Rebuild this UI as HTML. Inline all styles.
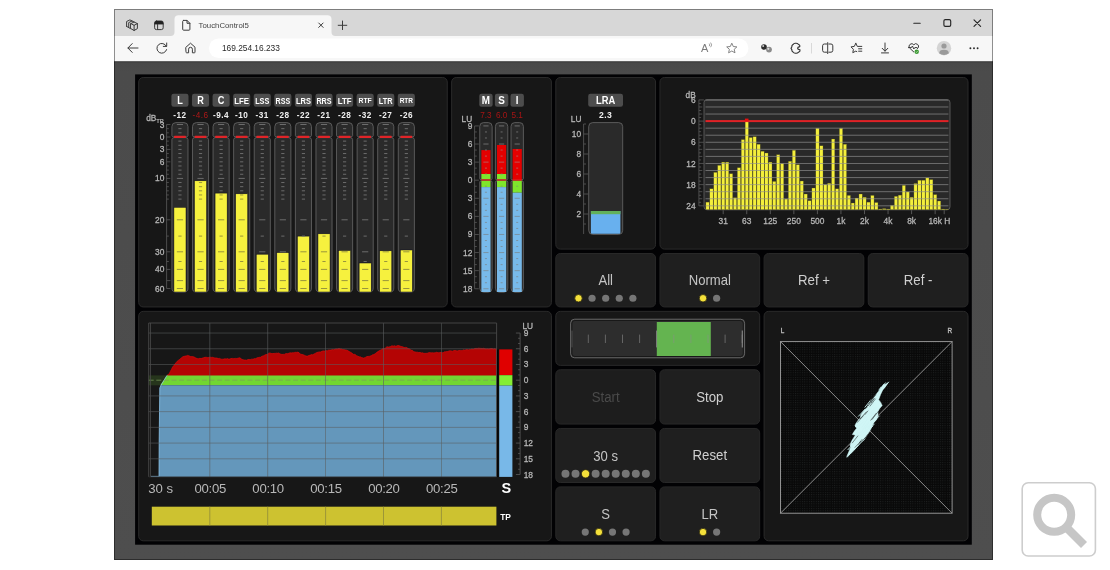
<!DOCTYPE html>
<html><head><meta charset="utf-8"><title>TouchControl5</title>
<style>
html,body{margin:0;padding:0;background:#fff;}
body{width:1110px;height:570px;overflow:hidden;font-family:"Liberation Sans",sans-serif;}
svg{display:block;will-change:transform;}
svg text{font-family:"Liberation Sans",sans-serif;}
</style></head><body>
<svg width="1110" height="570" viewBox="0 0 1110 570">
<defs>
<linearGradient id="gbg" x1="0" y1="0" x2="0" y2="1"><stop offset="0" stop-color="#383838"/><stop offset="0.004" stop-color="#494949"/><stop offset="0.02" stop-color="#4b4b4b"/><stop offset="1" stop-color="#4e4e4e"/></linearGradient>
<pattern id="dots" x="780.5" y="341.6" width="2.3" height="2.3" patternUnits="userSpaceOnUse"><rect width="2.3" height="2.3" fill="#090909"/><rect x="0.8" y="0.8" width="0.9" height="0.9" fill="#1f2222"/></pattern>
<clipPath id="specclip"><rect x="704" y="99.5" width="246" height="110.3" rx="3"/></clipPath>
</defs>
<rect x="0.00" y="0.00" width="1110.00" height="570.00" fill="#ffffff" />
<rect x="114.00" y="9.00" width="879.00" height="27.00" fill="#d7d7d7" />
<rect x="114.00" y="36.00" width="879.00" height="25.30" fill="#f7f7f7" />
<rect x="114.00" y="61.20" width="879.00" height="498.80" fill="url(#gbg)" />
<rect x="135.10" y="74.40" width="836.70" height="470.30" fill="#020204" />
<path d="M170.5 36 Q174.5 36 174.5 32 L174.5 19.3 Q174.5 15.3 178.5 15.3 L327.5 15.3 Q331.5 15.3 331.5 19.3 L331.5 32 Q331.5 36 335.5 36 Z" fill="#f7f7f7"/>
<rect x="208.90" y="38.40" width="539.50" height="19.60" fill="#ffffff" rx="9.8" />
<g fill="none" stroke="#3c3c3c" stroke-width="1" stroke-linecap="round" stroke-linejoin="round">
<path d="M130.8 23.6 l3.3 -1.6 l3.3 1.6 v5 l-3.3 1.9 l-3.3 -1.9 z M130.8 23.6 l3.3 1.7 l3.3 -1.7 M134.1 25.3 v5.2"/>
<path d="M128.7 27.6 v-5 l3.3 -1.6 l2.2 1 M128.7 27.6 l1.6 0.9 M126.6 26.4 v-4.9 l3.3 -1.6 l2.2 1 M126.6 26.4 l1.6 0.9"/>
<rect x="154.6" y="21" width="8.6" height="8.6" rx="1.8"/><path d="M154.6 24 h8.6 M157.6 24 v5.6"/>
</g>
<path d="M154.6 24 v-1.2 a1.8 1.8 0 0 1 1.8 -1.8 h5 a1.8 1.8 0 0 1 1.8 1.8 v1.2 z" fill="#222"/>
<g fill="none" stroke="#3c3c3c" stroke-width="1" stroke-linecap="round" stroke-linejoin="round">
<path d="M183.6 20.4 h3.4 l2.9 2.9 v6 a0.9 0.9 0 0 1 -0.9 0.9 h-5.4 a0.9 0.9 0 0 1 -0.9 -0.9 v-8 a0.9 0.9 0 0 1 0.9 -0.9 z M187 20.4 v2.9 h2.9"/>
<path d="M318.7 23 l4.4 4.4 M323.1 23 l-4.4 4.4"/>
<path d="M338.2 25.3 h8.6 M342.5 21 v8.6"/>
<path d="M128 48 h10 M132.2 43.6 l-4.3 4.4 l4.3 4.4"/>
<path d="M166.3 46.2 a4.9 4.9 0 1 0 0.3 3.4 M166.7 43 v3.4 h-3.4"/>
<path d="M186 47.2 l4.5 -4 l4.5 4 v5 a0.6 0.6 0 0 1 -0.6 0.6 h-2 v-3.6 a1.9 1.9 0 0 0 -3.8 0 v3.6 h-2 a0.6 0.6 0 0 1 -0.6 -0.6 z" stroke-width="1.0"/>
</g>
<text x="198.60" y="28.10" font-size="7.8" fill="#444" text-anchor="start" font-weight="normal" >TouchControl5</text>
<text x="221.90" y="51.00" font-size="8.35" fill="#2a2a2a" text-anchor="start" font-weight="normal" >169.254.16.233</text>
<g fill="none" stroke="#262626" stroke-width="1.15" stroke-linecap="round">
<path d="M913.8 23.2 h6.4"/>
<rect x="943.9" y="19.6" width="6.8" height="6.8" rx="1.4"/>
<path d="M974 19.8 l6.6 6.6 M980.6 19.8 l-6.6 6.6"/>
</g>
<text x="701.00" y="52.20" font-size="11" fill="#7a7a7a" text-anchor="start" font-weight="normal" >A</text>
<path d="M709.2 43.6 a2 2 0 0 1 0 2.6 M710.6 42.6 a3.4 3.4 0 0 1 0 4.6" fill="none" stroke="#777" stroke-width="0.7"/>
<path d="M731.8 43.2 l1.5 3.3 l3.6 0.4 l-2.7 2.4 l0.8 3.5 l-3.2 -1.8 l-3.2 1.8 l0.8 -3.5 l-2.7 -2.4 l3.6 -0.4 z" fill="none" stroke="#777" stroke-width="0.9" stroke-linejoin="round"/>
<circle cx="769" cy="49.6" r="2.9" fill="#8a8a8a"/><circle cx="768.3" cy="48.8" r="1.1" fill="#dcdcdc"/><circle cx="764" cy="47" r="2.8" fill="#2c2c2c"/><circle cx="763.2" cy="46.1" r="1.0" fill="#d0d0d0"/>
<path d="M798.8 44.6 Q797 43 795.6 43.3 Q794 43 793 44.6 Q791.6 45.4 791.8 47 L791 48.2 L791.8 49.6 Q791.6 51.2 793 52 Q794 53.4 795.6 53.2 Q797.2 53.6 798.6 52.2 Q800.4 51.4 800 49.8 Q797.6 49.4 797.6 48.2 Q797.6 47 799.8 46.6 Q800.2 45.4 798.8 44.6 Z" fill="none" stroke="#333" stroke-width="1.15" stroke-linejoin="round"/>
<line x1="811.50" y1="43.00" x2="811.50" y2="53.50" stroke="#d0d0d0" stroke-width="0.8" />
<g fill="none" stroke="#3a3a3a" stroke-width="1" stroke-linecap="round" stroke-linejoin="round">
<path d="M826.6 44 h-2.2 a1.8 1.8 0 0 0 -1.8 1.8 v4.6 a1.8 1.8 0 0 0 1.8 1.8 h2.2 M828.8 44 h2.2 a1.8 1.8 0 0 1 1.8 1.8 v4.6 a1.8 1.8 0 0 1 -1.8 1.8 h-2.2 M827.7 42.6 v11"/>
<path d="M855.8 43.3 l1.5 3.1 l1 0.1 M855.8 43.3 l-1.5 3.1 l-3.3 0.5 l2.4 2.4 l-0.6 3.4 l3 -1.6 l1 0.5 M858.6 46.4 h3.2 M858.6 48.8 h3.2 M858.6 51.2 h3.2"/>
<path d="M885 43 v8 M882.2 48.3 l2.8 2.9 l2.8 -2.9 M881.5 52.9 h7"/>
<path d="M913.8 52 l-4.2 -4 a2.5 2.5 0 0 1 4.2 -3.2 a2.5 2.5 0 0 1 4.2 3.2 l-0.6 0.6 M908.4 47.6 h3 l1 -1.6 l1.4 3 l1 -1.4 h2"/>
</g>
<circle cx="916.7" cy="51.7" r="2.2" fill="#3c9a34"/><path d="M915.7 51.8 l0.7 0.7 l1.3 -1.5" fill="none" stroke="#e8f4e0" stroke-width="0.6"/>
<circle cx="944" cy="48.2" r="7.2" fill="#d4d4d4"/><circle cx="944" cy="46" r="2.6" fill="#9a9a9a"/><path d="M939.2 53.2 a4.8 3.4 0 0 1 9.6 0 a7.2 7.2 0 0 1 -9.6 0 z" fill="#9a9a9a"/>
<circle cx="970.4" cy="48.3" r="0.95" fill="#2a2a2a"/><circle cx="974" cy="48.3" r="0.95" fill="#2a2a2a"/><circle cx="977.6" cy="48.3" r="0.95" fill="#2a2a2a"/>
<rect x="1022.20" y="482.80" width="73.20" height="73.20" fill="#ffffff" rx="6" stroke="#cdcdcd" stroke-width="1.6" />
<circle cx="1054.2" cy="514.8" r="17" fill="none" stroke="#c6c6c6" stroke-width="8"/>
<path d="M1066.5 527.5 L1084 545" stroke="#c6c6c6" stroke-width="8.5" fill="none"/>
<rect x="114.50" y="9.50" width="878.00" height="550.00" fill="none" stroke="#000000" stroke-width="1" opacity="0.42"/>
<rect x="138.70" y="77.50" width="308.55" height="229.45" fill="#171717" rx="4.5" stroke="#2a2a2a" stroke-width="1" />
<rect x="451.65" y="77.50" width="99.75" height="229.45" fill="#171717" rx="4.5" stroke="#2a2a2a" stroke-width="1" />
<rect x="555.80" y="77.50" width="99.75" height="171.60" fill="#171717" rx="4.5" stroke="#2a2a2a" stroke-width="1" />
<rect x="659.95" y="77.50" width="308.05" height="171.60" fill="#171717" rx="4.5" stroke="#2a2a2a" stroke-width="1" />
<rect x="138.70" y="311.35" width="412.70" height="229.45" fill="#171717" rx="4.5" stroke="#2a2a2a" stroke-width="1" />
<rect x="555.80" y="311.35" width="203.90" height="54.00" fill="#171717" rx="4.5" stroke="#2a2a2a" stroke-width="1" />
<rect x="764.10" y="311.35" width="203.90" height="229.45" fill="#171717" rx="4.5" stroke="#2a2a2a" stroke-width="1" />
<rect x="555.80" y="253.50" width="99.75" height="53.45" fill="#1f1f1f" rx="4.5" stroke="#282828" stroke-width="1" />
<text transform="translate(605.67 285.45) scale(0.95 1)" font-size="13.8" fill="#c4c4c4" text-anchor="middle" font-weight="normal" >All</text>
<circle cx="578.47" cy="298.25" r="3.75" fill="#f4e03a" stroke="#2a2610" stroke-width="0.8"/>
<circle cx="592.07" cy="298.25" r="3.6" fill="#767676"/>
<circle cx="605.67" cy="298.25" r="3.6" fill="#767676"/>
<circle cx="619.27" cy="298.25" r="3.6" fill="#767676"/>
<circle cx="632.87" cy="298.25" r="3.6" fill="#767676"/>
<rect x="659.95" y="253.50" width="99.75" height="53.45" fill="#1f1f1f" rx="4.5" stroke="#282828" stroke-width="1" />
<text transform="translate(709.83 285.45) scale(0.95 1)" font-size="13.8" fill="#c4c4c4" text-anchor="middle" font-weight="normal" >Normal</text>
<circle cx="703.03" cy="298.25" r="3.75" fill="#f4e03a" stroke="#2a2610" stroke-width="0.8"/>
<circle cx="716.63" cy="298.25" r="3.6" fill="#767676"/>
<rect x="764.10" y="253.50" width="99.75" height="53.45" fill="#1f1f1f" rx="4.5" stroke="#282828" stroke-width="1" />
<text transform="translate(813.98 285.23) scale(0.96 1)" font-size="13.8" fill="#d0d0d0" text-anchor="middle" font-weight="normal" >Ref +</text>
<rect x="868.25" y="253.50" width="99.75" height="53.45" fill="#1f1f1f" rx="4.5" stroke="#282828" stroke-width="1" />
<text transform="translate(918.12 285.23) scale(0.96 1)" font-size="13.8" fill="#d0d0d0" text-anchor="middle" font-weight="normal" >Ref -</text>
<rect x="555.80" y="369.75" width="99.75" height="54.30" fill="#1d1d1d" rx="4.5" stroke="#282828" stroke-width="1" />
<text transform="translate(605.67 401.90) scale(0.96 1)" font-size="13.8" fill="#4a4a4a" text-anchor="middle" font-weight="normal" >Start</text>
<rect x="659.95" y="369.75" width="99.75" height="54.30" fill="#1f1f1f" rx="4.5" stroke="#282828" stroke-width="1" />
<text transform="translate(709.83 401.90) scale(0.96 1)" font-size="13.8" fill="#d0d0d0" text-anchor="middle" font-weight="normal" >Stop</text>
<rect x="555.80" y="428.45" width="99.75" height="54.05" fill="#1f1f1f" rx="4.5" stroke="#282828" stroke-width="1" />
<text transform="translate(605.67 461.00) scale(0.95 1)" font-size="13.8" fill="#c4c4c4" text-anchor="middle" font-weight="normal" >30 s</text>
<circle cx="565.47" cy="473.80" r="4.0" fill="#767676"/>
<circle cx="575.52" cy="473.80" r="4.0" fill="#767676"/>
<circle cx="585.57" cy="473.80" r="4.15" fill="#f4e03a" stroke="#2a2610" stroke-width="0.8"/>
<circle cx="595.62" cy="473.80" r="4.0" fill="#767676"/>
<circle cx="605.67" cy="473.80" r="4.0" fill="#767676"/>
<circle cx="615.72" cy="473.80" r="4.0" fill="#767676"/>
<circle cx="625.77" cy="473.80" r="4.0" fill="#767676"/>
<circle cx="635.82" cy="473.80" r="4.0" fill="#767676"/>
<circle cx="645.87" cy="473.80" r="4.0" fill="#767676"/>
<rect x="659.95" y="428.45" width="99.75" height="54.05" fill="#1f1f1f" rx="4.5" stroke="#282828" stroke-width="1" />
<text transform="translate(709.83 460.48) scale(0.96 1)" font-size="13.8" fill="#d0d0d0" text-anchor="middle" font-weight="normal" >Reset</text>
<rect x="555.80" y="486.90" width="99.75" height="53.90" fill="#1f1f1f" rx="4.5" stroke="#282828" stroke-width="1" />
<text transform="translate(605.67 519.30) scale(0.95 1)" font-size="13.8" fill="#c4c4c4" text-anchor="middle" font-weight="normal" >S</text>
<circle cx="585.27" cy="532.10" r="3.6" fill="#767676"/>
<circle cx="598.88" cy="532.10" r="3.75" fill="#f4e03a" stroke="#2a2610" stroke-width="0.8"/>
<circle cx="612.48" cy="532.10" r="3.6" fill="#767676"/>
<circle cx="626.07" cy="532.10" r="3.6" fill="#767676"/>
<rect x="659.95" y="486.90" width="99.75" height="53.90" fill="#1f1f1f" rx="4.5" stroke="#282828" stroke-width="1" />
<text transform="translate(709.83 519.30) scale(0.95 1)" font-size="13.8" fill="#c4c4c4" text-anchor="middle" font-weight="normal" >LR</text>
<circle cx="703.03" cy="532.10" r="3.75" fill="#f4e03a" stroke="#2a2610" stroke-width="0.8"/>
<circle cx="716.63" cy="532.10" r="3.6" fill="#767676"/>
<rect x="171.40" y="93.70" width="17.10" height="13.10" fill="#4d4d4d" rx="2.2" />
<text transform="translate(179.95 104.00) scale(0.88 1)" font-size="10.4" fill="#ffffff" text-anchor="middle" font-weight="bold" >L</text>
<text x="179.95" y="118.20" font-size="8.2" fill="#f0f0f0" text-anchor="middle" font-weight="bold" letter-spacing="0.5">-12</text>
<path d="M171.90 135.6 V126.60 Q171.90 122.6 175.90 122.6 H184.00 Q188.00 122.6 188.00 126.6 V135.6 Q188.00 136.6 186.50 136.8 H173.40 Q171.90 136.6 171.90 135.6 Z" fill="#2a2a2a" stroke="#686868" stroke-width="0.8"/>
<path d="M171.90 139.6 Q171.90 138 173.90 137.6 H186.00 Q188.00 138 188.00 139.6 V288 Q188.00 292.2 184.00 292.2 H175.90 Q171.90 292.2 171.90 288 Z" fill="#2a2a2a" stroke="#686868" stroke-width="0.8"/>
<rect x="173.90" y="207.30" width="12.10" height="84.70" fill="#f6f13e" stroke="#0a0a20" stroke-width="0.5" />
<line x1="176.85" y1="124.50" x2="183.05" y2="124.50" stroke="#747474" stroke-width="0.9" />
<line x1="178.35" y1="128.67" x2="181.55" y2="128.67" stroke="#747474" stroke-width="0.9" />
<line x1="178.35" y1="132.83" x2="181.55" y2="132.83" stroke="#747474" stroke-width="0.9" />
<line x1="178.35" y1="141.14" x2="181.55" y2="141.14" stroke="#747474" stroke-width="0.9" />
<line x1="178.35" y1="145.28" x2="181.55" y2="145.28" stroke="#747474" stroke-width="0.9" />
<line x1="178.35" y1="149.42" x2="181.55" y2="149.42" stroke="#747474" stroke-width="0.9" />
<line x1="178.35" y1="153.56" x2="181.55" y2="153.56" stroke="#747474" stroke-width="0.9" />
<line x1="178.35" y1="157.70" x2="181.55" y2="157.70" stroke="#747474" stroke-width="0.9" />
<line x1="178.35" y1="161.84" x2="181.55" y2="161.84" stroke="#747474" stroke-width="0.9" />
<line x1="178.35" y1="165.98" x2="181.55" y2="165.98" stroke="#747474" stroke-width="0.9" />
<line x1="178.35" y1="170.12" x2="181.55" y2="170.12" stroke="#747474" stroke-width="0.9" />
<line x1="178.35" y1="174.26" x2="181.55" y2="174.26" stroke="#747474" stroke-width="0.9" />
<line x1="176.85" y1="178.40" x2="183.05" y2="178.40" stroke="#747474" stroke-width="0.9" />
<line x1="178.35" y1="182.54" x2="181.55" y2="182.54" stroke="#747474" stroke-width="0.9" />
<line x1="178.35" y1="186.68" x2="181.55" y2="186.68" stroke="#747474" stroke-width="0.9" />
<line x1="178.35" y1="190.82" x2="181.55" y2="190.82" stroke="#747474" stroke-width="0.9" />
<line x1="178.35" y1="194.96" x2="181.55" y2="194.96" stroke="#747474" stroke-width="0.9" />
<line x1="178.35" y1="199.10" x2="181.55" y2="199.10" stroke="#747474" stroke-width="0.9" />
<line x1="176.85" y1="219.80" x2="183.05" y2="219.80" stroke="#8f8b3c" stroke-width="0.9" />
<line x1="178.35" y1="236.10" x2="181.55" y2="236.10" stroke="#8f8b3c" stroke-width="0.9" />
<line x1="176.85" y1="251.80" x2="183.05" y2="251.80" stroke="#8f8b3c" stroke-width="0.9" />
<line x1="178.35" y1="261.50" x2="181.55" y2="261.50" stroke="#8f8b3c" stroke-width="0.9" />
<line x1="176.85" y1="269.40" x2="183.05" y2="269.40" stroke="#8f8b3c" stroke-width="0.9" />
<line x1="176.85" y1="280.60" x2="183.05" y2="280.60" stroke="#8f8b3c" stroke-width="0.9" />
<line x1="176.85" y1="288.50" x2="183.05" y2="288.50" stroke="#8f8b3c" stroke-width="0.9" />
<rect x="174.00" y="135.80" width="11.90" height="2.10" fill="#e02428" rx="0.6" />
<rect x="191.98" y="93.70" width="17.10" height="13.10" fill="#4d4d4d" rx="2.2" />
<text transform="translate(200.53 104.00) scale(0.88 1)" font-size="10.4" fill="#ffffff" text-anchor="middle" font-weight="bold" >R</text>
<text x="200.53" y="118.20" font-size="8.2" fill="#b01818" text-anchor="middle" font-weight="normal" letter-spacing="0.5">-4.6</text>
<path d="M192.48 135.6 V126.60 Q192.48 122.6 196.48 122.6 H204.58 Q208.58 122.6 208.58 126.6 V135.6 Q208.58 136.6 207.08 136.8 H193.98 Q192.48 136.6 192.48 135.6 Z" fill="#2a2a2a" stroke="#686868" stroke-width="0.8"/>
<path d="M192.48 139.6 Q192.48 138 194.48 137.6 H206.58 Q208.58 138 208.58 139.6 V288 Q208.58 292.2 204.58 292.2 H196.48 Q192.48 292.2 192.48 288 Z" fill="#2a2a2a" stroke="#686868" stroke-width="0.8"/>
<rect x="194.48" y="180.80" width="12.10" height="111.20" fill="#f6f13e" stroke="#0a0a20" stroke-width="0.5" />
<line x1="197.43" y1="124.50" x2="203.63" y2="124.50" stroke="#747474" stroke-width="0.9" />
<line x1="198.93" y1="128.67" x2="202.13" y2="128.67" stroke="#747474" stroke-width="0.9" />
<line x1="198.93" y1="132.83" x2="202.13" y2="132.83" stroke="#747474" stroke-width="0.9" />
<line x1="198.93" y1="141.14" x2="202.13" y2="141.14" stroke="#747474" stroke-width="0.9" />
<line x1="198.93" y1="145.28" x2="202.13" y2="145.28" stroke="#747474" stroke-width="0.9" />
<line x1="198.93" y1="149.42" x2="202.13" y2="149.42" stroke="#747474" stroke-width="0.9" />
<line x1="198.93" y1="153.56" x2="202.13" y2="153.56" stroke="#747474" stroke-width="0.9" />
<line x1="198.93" y1="157.70" x2="202.13" y2="157.70" stroke="#747474" stroke-width="0.9" />
<line x1="198.93" y1="161.84" x2="202.13" y2="161.84" stroke="#747474" stroke-width="0.9" />
<line x1="198.93" y1="165.98" x2="202.13" y2="165.98" stroke="#747474" stroke-width="0.9" />
<line x1="198.93" y1="170.12" x2="202.13" y2="170.12" stroke="#747474" stroke-width="0.9" />
<line x1="198.93" y1="174.26" x2="202.13" y2="174.26" stroke="#747474" stroke-width="0.9" />
<line x1="197.43" y1="178.40" x2="203.63" y2="178.40" stroke="#747474" stroke-width="0.9" />
<line x1="198.93" y1="182.54" x2="202.13" y2="182.54" stroke="#8f8b3c" stroke-width="0.9" />
<line x1="198.93" y1="186.68" x2="202.13" y2="186.68" stroke="#8f8b3c" stroke-width="0.9" />
<line x1="198.93" y1="190.82" x2="202.13" y2="190.82" stroke="#8f8b3c" stroke-width="0.9" />
<line x1="198.93" y1="194.96" x2="202.13" y2="194.96" stroke="#8f8b3c" stroke-width="0.9" />
<line x1="198.93" y1="199.10" x2="202.13" y2="199.10" stroke="#8f8b3c" stroke-width="0.9" />
<line x1="197.43" y1="219.80" x2="203.63" y2="219.80" stroke="#8f8b3c" stroke-width="0.9" />
<line x1="198.93" y1="236.10" x2="202.13" y2="236.10" stroke="#8f8b3c" stroke-width="0.9" />
<line x1="197.43" y1="251.80" x2="203.63" y2="251.80" stroke="#8f8b3c" stroke-width="0.9" />
<line x1="198.93" y1="261.50" x2="202.13" y2="261.50" stroke="#8f8b3c" stroke-width="0.9" />
<line x1="197.43" y1="269.40" x2="203.63" y2="269.40" stroke="#8f8b3c" stroke-width="0.9" />
<line x1="197.43" y1="280.60" x2="203.63" y2="280.60" stroke="#8f8b3c" stroke-width="0.9" />
<line x1="197.43" y1="288.50" x2="203.63" y2="288.50" stroke="#8f8b3c" stroke-width="0.9" />
<rect x="194.58" y="135.80" width="11.90" height="2.10" fill="#e02428" rx="0.6" />
<rect x="212.56" y="93.70" width="17.10" height="13.10" fill="#4d4d4d" rx="2.2" />
<text transform="translate(221.11 104.00) scale(0.88 1)" font-size="10.4" fill="#ffffff" text-anchor="middle" font-weight="bold" >C</text>
<text x="221.11" y="118.20" font-size="8.2" fill="#f0f0f0" text-anchor="middle" font-weight="bold" letter-spacing="0.5">-9.4</text>
<path d="M213.06 135.6 V126.60 Q213.06 122.6 217.06 122.6 H225.16 Q229.16 122.6 229.16 126.6 V135.6 Q229.16 136.6 227.66 136.8 H214.56 Q213.06 136.6 213.06 135.6 Z" fill="#2a2a2a" stroke="#686868" stroke-width="0.8"/>
<path d="M213.06 139.6 Q213.06 138 215.06 137.6 H227.16 Q229.16 138 229.16 139.6 V288 Q229.16 292.2 225.16 292.2 H217.06 Q213.06 292.2 213.06 288 Z" fill="#2a2a2a" stroke="#686868" stroke-width="0.8"/>
<rect x="215.06" y="193.10" width="12.10" height="98.90" fill="#f6f13e" stroke="#0a0a20" stroke-width="0.5" />
<line x1="218.01" y1="124.50" x2="224.21" y2="124.50" stroke="#747474" stroke-width="0.9" />
<line x1="219.51" y1="128.67" x2="222.71" y2="128.67" stroke="#747474" stroke-width="0.9" />
<line x1="219.51" y1="132.83" x2="222.71" y2="132.83" stroke="#747474" stroke-width="0.9" />
<line x1="219.51" y1="141.14" x2="222.71" y2="141.14" stroke="#747474" stroke-width="0.9" />
<line x1="219.51" y1="145.28" x2="222.71" y2="145.28" stroke="#747474" stroke-width="0.9" />
<line x1="219.51" y1="149.42" x2="222.71" y2="149.42" stroke="#747474" stroke-width="0.9" />
<line x1="219.51" y1="153.56" x2="222.71" y2="153.56" stroke="#747474" stroke-width="0.9" />
<line x1="219.51" y1="157.70" x2="222.71" y2="157.70" stroke="#747474" stroke-width="0.9" />
<line x1="219.51" y1="161.84" x2="222.71" y2="161.84" stroke="#747474" stroke-width="0.9" />
<line x1="219.51" y1="165.98" x2="222.71" y2="165.98" stroke="#747474" stroke-width="0.9" />
<line x1="219.51" y1="170.12" x2="222.71" y2="170.12" stroke="#747474" stroke-width="0.9" />
<line x1="219.51" y1="174.26" x2="222.71" y2="174.26" stroke="#747474" stroke-width="0.9" />
<line x1="218.01" y1="178.40" x2="224.21" y2="178.40" stroke="#747474" stroke-width="0.9" />
<line x1="219.51" y1="182.54" x2="222.71" y2="182.54" stroke="#747474" stroke-width="0.9" />
<line x1="219.51" y1="186.68" x2="222.71" y2="186.68" stroke="#747474" stroke-width="0.9" />
<line x1="219.51" y1="190.82" x2="222.71" y2="190.82" stroke="#747474" stroke-width="0.9" />
<line x1="219.51" y1="194.96" x2="222.71" y2="194.96" stroke="#8f8b3c" stroke-width="0.9" />
<line x1="219.51" y1="199.10" x2="222.71" y2="199.10" stroke="#8f8b3c" stroke-width="0.9" />
<line x1="218.01" y1="219.80" x2="224.21" y2="219.80" stroke="#8f8b3c" stroke-width="0.9" />
<line x1="219.51" y1="236.10" x2="222.71" y2="236.10" stroke="#8f8b3c" stroke-width="0.9" />
<line x1="218.01" y1="251.80" x2="224.21" y2="251.80" stroke="#8f8b3c" stroke-width="0.9" />
<line x1="219.51" y1="261.50" x2="222.71" y2="261.50" stroke="#8f8b3c" stroke-width="0.9" />
<line x1="218.01" y1="269.40" x2="224.21" y2="269.40" stroke="#8f8b3c" stroke-width="0.9" />
<line x1="218.01" y1="280.60" x2="224.21" y2="280.60" stroke="#8f8b3c" stroke-width="0.9" />
<line x1="218.01" y1="288.50" x2="224.21" y2="288.50" stroke="#8f8b3c" stroke-width="0.9" />
<rect x="215.16" y="135.80" width="11.90" height="2.10" fill="#e02428" rx="0.6" />
<rect x="233.14" y="93.70" width="17.10" height="13.10" fill="#4d4d4d" rx="2.2" />
<text transform="translate(241.69 104.40) scale(0.8 1)" font-size="9.8" fill="#ffffff" text-anchor="middle" font-weight="bold" >LFE</text>
<text x="241.69" y="118.20" font-size="8.2" fill="#f0f0f0" text-anchor="middle" font-weight="bold" letter-spacing="0.5">-10</text>
<path d="M233.64 135.6 V126.60 Q233.64 122.6 237.64 122.6 H245.74 Q249.74 122.6 249.74 126.6 V135.6 Q249.74 136.6 248.24 136.8 H235.14 Q233.64 136.6 233.64 135.6 Z" fill="#2a2a2a" stroke="#686868" stroke-width="0.8"/>
<path d="M233.64 139.6 Q233.64 138 235.64 137.6 H247.74 Q249.74 138 249.74 139.6 V288 Q249.74 292.2 245.74 292.2 H237.64 Q233.64 292.2 233.64 288 Z" fill="#2a2a2a" stroke="#686868" stroke-width="0.8"/>
<rect x="235.64" y="193.80" width="12.10" height="98.20" fill="#f6f13e" stroke="#0a0a20" stroke-width="0.5" />
<line x1="238.59" y1="124.50" x2="244.79" y2="124.50" stroke="#747474" stroke-width="0.9" />
<line x1="240.09" y1="128.67" x2="243.29" y2="128.67" stroke="#747474" stroke-width="0.9" />
<line x1="240.09" y1="132.83" x2="243.29" y2="132.83" stroke="#747474" stroke-width="0.9" />
<line x1="240.09" y1="141.14" x2="243.29" y2="141.14" stroke="#747474" stroke-width="0.9" />
<line x1="240.09" y1="145.28" x2="243.29" y2="145.28" stroke="#747474" stroke-width="0.9" />
<line x1="240.09" y1="149.42" x2="243.29" y2="149.42" stroke="#747474" stroke-width="0.9" />
<line x1="240.09" y1="153.56" x2="243.29" y2="153.56" stroke="#747474" stroke-width="0.9" />
<line x1="240.09" y1="157.70" x2="243.29" y2="157.70" stroke="#747474" stroke-width="0.9" />
<line x1="240.09" y1="161.84" x2="243.29" y2="161.84" stroke="#747474" stroke-width="0.9" />
<line x1="240.09" y1="165.98" x2="243.29" y2="165.98" stroke="#747474" stroke-width="0.9" />
<line x1="240.09" y1="170.12" x2="243.29" y2="170.12" stroke="#747474" stroke-width="0.9" />
<line x1="240.09" y1="174.26" x2="243.29" y2="174.26" stroke="#747474" stroke-width="0.9" />
<line x1="238.59" y1="178.40" x2="244.79" y2="178.40" stroke="#747474" stroke-width="0.9" />
<line x1="240.09" y1="182.54" x2="243.29" y2="182.54" stroke="#747474" stroke-width="0.9" />
<line x1="240.09" y1="186.68" x2="243.29" y2="186.68" stroke="#747474" stroke-width="0.9" />
<line x1="240.09" y1="190.82" x2="243.29" y2="190.82" stroke="#747474" stroke-width="0.9" />
<line x1="240.09" y1="194.96" x2="243.29" y2="194.96" stroke="#8f8b3c" stroke-width="0.9" />
<line x1="240.09" y1="199.10" x2="243.29" y2="199.10" stroke="#8f8b3c" stroke-width="0.9" />
<line x1="238.59" y1="219.80" x2="244.79" y2="219.80" stroke="#8f8b3c" stroke-width="0.9" />
<line x1="240.09" y1="236.10" x2="243.29" y2="236.10" stroke="#8f8b3c" stroke-width="0.9" />
<line x1="238.59" y1="251.80" x2="244.79" y2="251.80" stroke="#8f8b3c" stroke-width="0.9" />
<line x1="240.09" y1="261.50" x2="243.29" y2="261.50" stroke="#8f8b3c" stroke-width="0.9" />
<line x1="238.59" y1="269.40" x2="244.79" y2="269.40" stroke="#8f8b3c" stroke-width="0.9" />
<line x1="238.59" y1="280.60" x2="244.79" y2="280.60" stroke="#8f8b3c" stroke-width="0.9" />
<line x1="238.59" y1="288.50" x2="244.79" y2="288.50" stroke="#8f8b3c" stroke-width="0.9" />
<rect x="235.74" y="135.80" width="11.90" height="2.10" fill="#e02428" rx="0.6" />
<rect x="253.72" y="93.70" width="17.10" height="13.10" fill="#4d4d4d" rx="2.2" />
<text x="262.27" y="104.00" font-size="9.2" fill="#ffffff" text-anchor="middle" font-weight="bold" textLength="14.2" lengthAdjust="spacingAndGlyphs">LSS</text>
<text x="262.27" y="118.20" font-size="8.2" fill="#f0f0f0" text-anchor="middle" font-weight="bold" letter-spacing="0.5">-31</text>
<path d="M254.22 135.6 V126.60 Q254.22 122.6 258.22 122.6 H266.32 Q270.32 122.6 270.32 126.6 V135.6 Q270.32 136.6 268.82 136.8 H255.72 Q254.22 136.6 254.22 135.6 Z" fill="#2a2a2a" stroke="#686868" stroke-width="0.8"/>
<path d="M254.22 139.6 Q254.22 138 256.22 137.6 H268.32 Q270.32 138 270.32 139.6 V288 Q270.32 292.2 266.32 292.2 H258.22 Q254.22 292.2 254.22 288 Z" fill="#2a2a2a" stroke="#686868" stroke-width="0.8"/>
<rect x="256.22" y="254.20" width="12.10" height="37.80" fill="#f6f13e" stroke="#0a0a20" stroke-width="0.5" />
<line x1="259.17" y1="124.50" x2="265.37" y2="124.50" stroke="#747474" stroke-width="0.9" />
<line x1="260.67" y1="128.67" x2="263.87" y2="128.67" stroke="#747474" stroke-width="0.9" />
<line x1="260.67" y1="132.83" x2="263.87" y2="132.83" stroke="#747474" stroke-width="0.9" />
<line x1="260.67" y1="141.14" x2="263.87" y2="141.14" stroke="#747474" stroke-width="0.9" />
<line x1="260.67" y1="145.28" x2="263.87" y2="145.28" stroke="#747474" stroke-width="0.9" />
<line x1="260.67" y1="149.42" x2="263.87" y2="149.42" stroke="#747474" stroke-width="0.9" />
<line x1="260.67" y1="153.56" x2="263.87" y2="153.56" stroke="#747474" stroke-width="0.9" />
<line x1="260.67" y1="157.70" x2="263.87" y2="157.70" stroke="#747474" stroke-width="0.9" />
<line x1="260.67" y1="161.84" x2="263.87" y2="161.84" stroke="#747474" stroke-width="0.9" />
<line x1="260.67" y1="165.98" x2="263.87" y2="165.98" stroke="#747474" stroke-width="0.9" />
<line x1="260.67" y1="170.12" x2="263.87" y2="170.12" stroke="#747474" stroke-width="0.9" />
<line x1="260.67" y1="174.26" x2="263.87" y2="174.26" stroke="#747474" stroke-width="0.9" />
<line x1="259.17" y1="178.40" x2="265.37" y2="178.40" stroke="#747474" stroke-width="0.9" />
<line x1="260.67" y1="182.54" x2="263.87" y2="182.54" stroke="#747474" stroke-width="0.9" />
<line x1="260.67" y1="186.68" x2="263.87" y2="186.68" stroke="#747474" stroke-width="0.9" />
<line x1="260.67" y1="190.82" x2="263.87" y2="190.82" stroke="#747474" stroke-width="0.9" />
<line x1="260.67" y1="194.96" x2="263.87" y2="194.96" stroke="#747474" stroke-width="0.9" />
<line x1="260.67" y1="199.10" x2="263.87" y2="199.10" stroke="#747474" stroke-width="0.9" />
<line x1="259.17" y1="219.80" x2="265.37" y2="219.80" stroke="#747474" stroke-width="0.9" />
<line x1="260.67" y1="236.10" x2="263.87" y2="236.10" stroke="#747474" stroke-width="0.9" />
<line x1="259.17" y1="251.80" x2="265.37" y2="251.80" stroke="#747474" stroke-width="0.9" />
<line x1="260.67" y1="261.50" x2="263.87" y2="261.50" stroke="#8f8b3c" stroke-width="0.9" />
<line x1="259.17" y1="269.40" x2="265.37" y2="269.40" stroke="#8f8b3c" stroke-width="0.9" />
<line x1="259.17" y1="280.60" x2="265.37" y2="280.60" stroke="#8f8b3c" stroke-width="0.9" />
<line x1="259.17" y1="288.50" x2="265.37" y2="288.50" stroke="#8f8b3c" stroke-width="0.9" />
<rect x="256.32" y="135.80" width="11.90" height="2.10" fill="#e02428" rx="0.6" />
<rect x="274.30" y="93.70" width="17.10" height="13.10" fill="#4d4d4d" rx="2.2" />
<text x="282.85" y="104.00" font-size="9.2" fill="#ffffff" text-anchor="middle" font-weight="bold" textLength="14.6" lengthAdjust="spacingAndGlyphs">RSS</text>
<text x="282.85" y="118.20" font-size="8.2" fill="#f0f0f0" text-anchor="middle" font-weight="bold" letter-spacing="0.5">-28</text>
<path d="M274.80 135.6 V126.60 Q274.80 122.6 278.80 122.6 H286.90 Q290.90 122.6 290.90 126.6 V135.6 Q290.90 136.6 289.40 136.8 H276.30 Q274.80 136.6 274.80 135.6 Z" fill="#2a2a2a" stroke="#686868" stroke-width="0.8"/>
<path d="M274.80 139.6 Q274.80 138 276.80 137.6 H288.90 Q290.90 138 290.90 139.6 V288 Q290.90 292.2 286.90 292.2 H278.80 Q274.80 292.2 274.80 288 Z" fill="#2a2a2a" stroke="#686868" stroke-width="0.8"/>
<rect x="276.80" y="252.60" width="12.10" height="39.40" fill="#f6f13e" stroke="#0a0a20" stroke-width="0.5" />
<line x1="279.75" y1="124.50" x2="285.95" y2="124.50" stroke="#747474" stroke-width="0.9" />
<line x1="281.25" y1="128.67" x2="284.45" y2="128.67" stroke="#747474" stroke-width="0.9" />
<line x1="281.25" y1="132.83" x2="284.45" y2="132.83" stroke="#747474" stroke-width="0.9" />
<line x1="281.25" y1="141.14" x2="284.45" y2="141.14" stroke="#747474" stroke-width="0.9" />
<line x1="281.25" y1="145.28" x2="284.45" y2="145.28" stroke="#747474" stroke-width="0.9" />
<line x1="281.25" y1="149.42" x2="284.45" y2="149.42" stroke="#747474" stroke-width="0.9" />
<line x1="281.25" y1="153.56" x2="284.45" y2="153.56" stroke="#747474" stroke-width="0.9" />
<line x1="281.25" y1="157.70" x2="284.45" y2="157.70" stroke="#747474" stroke-width="0.9" />
<line x1="281.25" y1="161.84" x2="284.45" y2="161.84" stroke="#747474" stroke-width="0.9" />
<line x1="281.25" y1="165.98" x2="284.45" y2="165.98" stroke="#747474" stroke-width="0.9" />
<line x1="281.25" y1="170.12" x2="284.45" y2="170.12" stroke="#747474" stroke-width="0.9" />
<line x1="281.25" y1="174.26" x2="284.45" y2="174.26" stroke="#747474" stroke-width="0.9" />
<line x1="279.75" y1="178.40" x2="285.95" y2="178.40" stroke="#747474" stroke-width="0.9" />
<line x1="281.25" y1="182.54" x2="284.45" y2="182.54" stroke="#747474" stroke-width="0.9" />
<line x1="281.25" y1="186.68" x2="284.45" y2="186.68" stroke="#747474" stroke-width="0.9" />
<line x1="281.25" y1="190.82" x2="284.45" y2="190.82" stroke="#747474" stroke-width="0.9" />
<line x1="281.25" y1="194.96" x2="284.45" y2="194.96" stroke="#747474" stroke-width="0.9" />
<line x1="281.25" y1="199.10" x2="284.45" y2="199.10" stroke="#747474" stroke-width="0.9" />
<line x1="279.75" y1="219.80" x2="285.95" y2="219.80" stroke="#747474" stroke-width="0.9" />
<line x1="281.25" y1="236.10" x2="284.45" y2="236.10" stroke="#747474" stroke-width="0.9" />
<line x1="279.75" y1="251.80" x2="285.95" y2="251.80" stroke="#747474" stroke-width="0.9" />
<line x1="281.25" y1="261.50" x2="284.45" y2="261.50" stroke="#8f8b3c" stroke-width="0.9" />
<line x1="279.75" y1="269.40" x2="285.95" y2="269.40" stroke="#8f8b3c" stroke-width="0.9" />
<line x1="279.75" y1="280.60" x2="285.95" y2="280.60" stroke="#8f8b3c" stroke-width="0.9" />
<line x1="279.75" y1="288.50" x2="285.95" y2="288.50" stroke="#8f8b3c" stroke-width="0.9" />
<rect x="276.90" y="135.80" width="11.90" height="2.10" fill="#e02428" rx="0.6" />
<rect x="294.88" y="93.70" width="17.10" height="13.10" fill="#4d4d4d" rx="2.2" />
<text x="303.43" y="104.00" font-size="9.2" fill="#ffffff" text-anchor="middle" font-weight="bold" textLength="15.0" lengthAdjust="spacingAndGlyphs">LRS</text>
<text x="303.43" y="118.20" font-size="8.2" fill="#f0f0f0" text-anchor="middle" font-weight="bold" letter-spacing="0.5">-22</text>
<path d="M295.38 135.6 V126.60 Q295.38 122.6 299.38 122.6 H307.48 Q311.48 122.6 311.48 126.6 V135.6 Q311.48 136.6 309.98 136.8 H296.88 Q295.38 136.6 295.38 135.6 Z" fill="#2a2a2a" stroke="#686868" stroke-width="0.8"/>
<path d="M295.38 139.6 Q295.38 138 297.38 137.6 H309.48 Q311.48 138 311.48 139.6 V288 Q311.48 292.2 307.48 292.2 H299.38 Q295.38 292.2 295.38 288 Z" fill="#2a2a2a" stroke="#686868" stroke-width="0.8"/>
<rect x="297.38" y="236.10" width="12.10" height="55.90" fill="#f6f13e" stroke="#0a0a20" stroke-width="0.5" />
<line x1="300.33" y1="124.50" x2="306.53" y2="124.50" stroke="#747474" stroke-width="0.9" />
<line x1="301.83" y1="128.67" x2="305.03" y2="128.67" stroke="#747474" stroke-width="0.9" />
<line x1="301.83" y1="132.83" x2="305.03" y2="132.83" stroke="#747474" stroke-width="0.9" />
<line x1="301.83" y1="141.14" x2="305.03" y2="141.14" stroke="#747474" stroke-width="0.9" />
<line x1="301.83" y1="145.28" x2="305.03" y2="145.28" stroke="#747474" stroke-width="0.9" />
<line x1="301.83" y1="149.42" x2="305.03" y2="149.42" stroke="#747474" stroke-width="0.9" />
<line x1="301.83" y1="153.56" x2="305.03" y2="153.56" stroke="#747474" stroke-width="0.9" />
<line x1="301.83" y1="157.70" x2="305.03" y2="157.70" stroke="#747474" stroke-width="0.9" />
<line x1="301.83" y1="161.84" x2="305.03" y2="161.84" stroke="#747474" stroke-width="0.9" />
<line x1="301.83" y1="165.98" x2="305.03" y2="165.98" stroke="#747474" stroke-width="0.9" />
<line x1="301.83" y1="170.12" x2="305.03" y2="170.12" stroke="#747474" stroke-width="0.9" />
<line x1="301.83" y1="174.26" x2="305.03" y2="174.26" stroke="#747474" stroke-width="0.9" />
<line x1="300.33" y1="178.40" x2="306.53" y2="178.40" stroke="#747474" stroke-width="0.9" />
<line x1="301.83" y1="182.54" x2="305.03" y2="182.54" stroke="#747474" stroke-width="0.9" />
<line x1="301.83" y1="186.68" x2="305.03" y2="186.68" stroke="#747474" stroke-width="0.9" />
<line x1="301.83" y1="190.82" x2="305.03" y2="190.82" stroke="#747474" stroke-width="0.9" />
<line x1="301.83" y1="194.96" x2="305.03" y2="194.96" stroke="#747474" stroke-width="0.9" />
<line x1="301.83" y1="199.10" x2="305.03" y2="199.10" stroke="#747474" stroke-width="0.9" />
<line x1="300.33" y1="219.80" x2="306.53" y2="219.80" stroke="#747474" stroke-width="0.9" />
<line x1="301.83" y1="236.10" x2="305.03" y2="236.10" stroke="#747474" stroke-width="0.9" />
<line x1="300.33" y1="251.80" x2="306.53" y2="251.80" stroke="#8f8b3c" stroke-width="0.9" />
<line x1="301.83" y1="261.50" x2="305.03" y2="261.50" stroke="#8f8b3c" stroke-width="0.9" />
<line x1="300.33" y1="269.40" x2="306.53" y2="269.40" stroke="#8f8b3c" stroke-width="0.9" />
<line x1="300.33" y1="280.60" x2="306.53" y2="280.60" stroke="#8f8b3c" stroke-width="0.9" />
<line x1="300.33" y1="288.50" x2="306.53" y2="288.50" stroke="#8f8b3c" stroke-width="0.9" />
<rect x="297.48" y="135.80" width="11.90" height="2.10" fill="#e02428" rx="0.6" />
<rect x="315.46" y="93.70" width="17.10" height="13.10" fill="#4d4d4d" rx="2.2" />
<text x="324.01" y="104.00" font-size="9.2" fill="#ffffff" text-anchor="middle" font-weight="bold" textLength="15.2" lengthAdjust="spacingAndGlyphs">RRS</text>
<text x="324.01" y="118.20" font-size="8.2" fill="#f0f0f0" text-anchor="middle" font-weight="bold" letter-spacing="0.5">-21</text>
<path d="M315.96 135.6 V126.60 Q315.96 122.6 319.96 122.6 H328.06 Q332.06 122.6 332.06 126.6 V135.6 Q332.06 136.6 330.56 136.8 H317.46 Q315.96 136.6 315.96 135.6 Z" fill="#2a2a2a" stroke="#686868" stroke-width="0.8"/>
<path d="M315.96 139.6 Q315.96 138 317.96 137.6 H330.06 Q332.06 138 332.06 139.6 V288 Q332.06 292.2 328.06 292.2 H319.96 Q315.96 292.2 315.96 288 Z" fill="#2a2a2a" stroke="#686868" stroke-width="0.8"/>
<rect x="317.96" y="233.80" width="12.10" height="58.20" fill="#f6f13e" stroke="#0a0a20" stroke-width="0.5" />
<line x1="320.91" y1="124.50" x2="327.11" y2="124.50" stroke="#747474" stroke-width="0.9" />
<line x1="322.41" y1="128.67" x2="325.61" y2="128.67" stroke="#747474" stroke-width="0.9" />
<line x1="322.41" y1="132.83" x2="325.61" y2="132.83" stroke="#747474" stroke-width="0.9" />
<line x1="322.41" y1="141.14" x2="325.61" y2="141.14" stroke="#747474" stroke-width="0.9" />
<line x1="322.41" y1="145.28" x2="325.61" y2="145.28" stroke="#747474" stroke-width="0.9" />
<line x1="322.41" y1="149.42" x2="325.61" y2="149.42" stroke="#747474" stroke-width="0.9" />
<line x1="322.41" y1="153.56" x2="325.61" y2="153.56" stroke="#747474" stroke-width="0.9" />
<line x1="322.41" y1="157.70" x2="325.61" y2="157.70" stroke="#747474" stroke-width="0.9" />
<line x1="322.41" y1="161.84" x2="325.61" y2="161.84" stroke="#747474" stroke-width="0.9" />
<line x1="322.41" y1="165.98" x2="325.61" y2="165.98" stroke="#747474" stroke-width="0.9" />
<line x1="322.41" y1="170.12" x2="325.61" y2="170.12" stroke="#747474" stroke-width="0.9" />
<line x1="322.41" y1="174.26" x2="325.61" y2="174.26" stroke="#747474" stroke-width="0.9" />
<line x1="320.91" y1="178.40" x2="327.11" y2="178.40" stroke="#747474" stroke-width="0.9" />
<line x1="322.41" y1="182.54" x2="325.61" y2="182.54" stroke="#747474" stroke-width="0.9" />
<line x1="322.41" y1="186.68" x2="325.61" y2="186.68" stroke="#747474" stroke-width="0.9" />
<line x1="322.41" y1="190.82" x2="325.61" y2="190.82" stroke="#747474" stroke-width="0.9" />
<line x1="322.41" y1="194.96" x2="325.61" y2="194.96" stroke="#747474" stroke-width="0.9" />
<line x1="322.41" y1="199.10" x2="325.61" y2="199.10" stroke="#747474" stroke-width="0.9" />
<line x1="320.91" y1="219.80" x2="327.11" y2="219.80" stroke="#747474" stroke-width="0.9" />
<line x1="322.41" y1="236.10" x2="325.61" y2="236.10" stroke="#8f8b3c" stroke-width="0.9" />
<line x1="320.91" y1="251.80" x2="327.11" y2="251.80" stroke="#8f8b3c" stroke-width="0.9" />
<line x1="322.41" y1="261.50" x2="325.61" y2="261.50" stroke="#8f8b3c" stroke-width="0.9" />
<line x1="320.91" y1="269.40" x2="327.11" y2="269.40" stroke="#8f8b3c" stroke-width="0.9" />
<line x1="320.91" y1="280.60" x2="327.11" y2="280.60" stroke="#8f8b3c" stroke-width="0.9" />
<line x1="320.91" y1="288.50" x2="327.11" y2="288.50" stroke="#8f8b3c" stroke-width="0.9" />
<rect x="318.06" y="135.80" width="11.90" height="2.10" fill="#e02428" rx="0.6" />
<rect x="336.04" y="93.70" width="17.10" height="13.10" fill="#4d4d4d" rx="2.2" />
<text x="344.59" y="104.00" font-size="9.2" fill="#ffffff" text-anchor="middle" font-weight="bold" textLength="13.8" lengthAdjust="spacingAndGlyphs">LTF</text>
<text x="344.59" y="118.20" font-size="8.2" fill="#f0f0f0" text-anchor="middle" font-weight="bold" letter-spacing="0.5">-28</text>
<path d="M336.54 135.6 V126.60 Q336.54 122.6 340.54 122.6 H348.64 Q352.64 122.6 352.64 126.6 V135.6 Q352.64 136.6 351.14 136.8 H338.04 Q336.54 136.6 336.54 135.6 Z" fill="#2a2a2a" stroke="#686868" stroke-width="0.8"/>
<path d="M336.54 139.6 Q336.54 138 338.54 137.6 H350.64 Q352.64 138 352.64 139.6 V288 Q352.64 292.2 348.64 292.2 H340.54 Q336.54 292.2 336.54 288 Z" fill="#2a2a2a" stroke="#686868" stroke-width="0.8"/>
<rect x="338.54" y="250.50" width="12.10" height="41.50" fill="#f6f13e" stroke="#0a0a20" stroke-width="0.5" />
<line x1="341.49" y1="124.50" x2="347.69" y2="124.50" stroke="#747474" stroke-width="0.9" />
<line x1="342.99" y1="128.67" x2="346.19" y2="128.67" stroke="#747474" stroke-width="0.9" />
<line x1="342.99" y1="132.83" x2="346.19" y2="132.83" stroke="#747474" stroke-width="0.9" />
<line x1="342.99" y1="141.14" x2="346.19" y2="141.14" stroke="#747474" stroke-width="0.9" />
<line x1="342.99" y1="145.28" x2="346.19" y2="145.28" stroke="#747474" stroke-width="0.9" />
<line x1="342.99" y1="149.42" x2="346.19" y2="149.42" stroke="#747474" stroke-width="0.9" />
<line x1="342.99" y1="153.56" x2="346.19" y2="153.56" stroke="#747474" stroke-width="0.9" />
<line x1="342.99" y1="157.70" x2="346.19" y2="157.70" stroke="#747474" stroke-width="0.9" />
<line x1="342.99" y1="161.84" x2="346.19" y2="161.84" stroke="#747474" stroke-width="0.9" />
<line x1="342.99" y1="165.98" x2="346.19" y2="165.98" stroke="#747474" stroke-width="0.9" />
<line x1="342.99" y1="170.12" x2="346.19" y2="170.12" stroke="#747474" stroke-width="0.9" />
<line x1="342.99" y1="174.26" x2="346.19" y2="174.26" stroke="#747474" stroke-width="0.9" />
<line x1="341.49" y1="178.40" x2="347.69" y2="178.40" stroke="#747474" stroke-width="0.9" />
<line x1="342.99" y1="182.54" x2="346.19" y2="182.54" stroke="#747474" stroke-width="0.9" />
<line x1="342.99" y1="186.68" x2="346.19" y2="186.68" stroke="#747474" stroke-width="0.9" />
<line x1="342.99" y1="190.82" x2="346.19" y2="190.82" stroke="#747474" stroke-width="0.9" />
<line x1="342.99" y1="194.96" x2="346.19" y2="194.96" stroke="#747474" stroke-width="0.9" />
<line x1="342.99" y1="199.10" x2="346.19" y2="199.10" stroke="#747474" stroke-width="0.9" />
<line x1="341.49" y1="219.80" x2="347.69" y2="219.80" stroke="#747474" stroke-width="0.9" />
<line x1="342.99" y1="236.10" x2="346.19" y2="236.10" stroke="#747474" stroke-width="0.9" />
<line x1="341.49" y1="251.80" x2="347.69" y2="251.80" stroke="#8f8b3c" stroke-width="0.9" />
<line x1="342.99" y1="261.50" x2="346.19" y2="261.50" stroke="#8f8b3c" stroke-width="0.9" />
<line x1="341.49" y1="269.40" x2="347.69" y2="269.40" stroke="#8f8b3c" stroke-width="0.9" />
<line x1="341.49" y1="280.60" x2="347.69" y2="280.60" stroke="#8f8b3c" stroke-width="0.9" />
<line x1="341.49" y1="288.50" x2="347.69" y2="288.50" stroke="#8f8b3c" stroke-width="0.9" />
<rect x="338.64" y="135.80" width="11.90" height="2.10" fill="#e02428" rx="0.6" />
<rect x="356.62" y="93.70" width="17.10" height="13.10" fill="#4d4d4d" rx="2.2" />
<text x="365.17" y="103.20" font-size="7.8" fill="#ffffff" text-anchor="middle" font-weight="bold" textLength="13.2" lengthAdjust="spacingAndGlyphs">RTF</text>
<text x="365.17" y="118.20" font-size="8.2" fill="#f0f0f0" text-anchor="middle" font-weight="bold" letter-spacing="0.5">-32</text>
<path d="M357.12 135.6 V126.60 Q357.12 122.6 361.12 122.6 H369.22 Q373.22 122.6 373.22 126.6 V135.6 Q373.22 136.6 371.72 136.8 H358.62 Q357.12 136.6 357.12 135.6 Z" fill="#2a2a2a" stroke="#686868" stroke-width="0.8"/>
<path d="M357.12 139.6 Q357.12 138 359.12 137.6 H371.22 Q373.22 138 373.22 139.6 V288 Q373.22 292.2 369.22 292.2 H361.12 Q357.12 292.2 357.12 288 Z" fill="#2a2a2a" stroke="#686868" stroke-width="0.8"/>
<rect x="359.12" y="263.00" width="12.10" height="29.00" fill="#f6f13e" stroke="#0a0a20" stroke-width="0.5" />
<line x1="362.07" y1="124.50" x2="368.27" y2="124.50" stroke="#747474" stroke-width="0.9" />
<line x1="363.57" y1="128.67" x2="366.77" y2="128.67" stroke="#747474" stroke-width="0.9" />
<line x1="363.57" y1="132.83" x2="366.77" y2="132.83" stroke="#747474" stroke-width="0.9" />
<line x1="363.57" y1="141.14" x2="366.77" y2="141.14" stroke="#747474" stroke-width="0.9" />
<line x1="363.57" y1="145.28" x2="366.77" y2="145.28" stroke="#747474" stroke-width="0.9" />
<line x1="363.57" y1="149.42" x2="366.77" y2="149.42" stroke="#747474" stroke-width="0.9" />
<line x1="363.57" y1="153.56" x2="366.77" y2="153.56" stroke="#747474" stroke-width="0.9" />
<line x1="363.57" y1="157.70" x2="366.77" y2="157.70" stroke="#747474" stroke-width="0.9" />
<line x1="363.57" y1="161.84" x2="366.77" y2="161.84" stroke="#747474" stroke-width="0.9" />
<line x1="363.57" y1="165.98" x2="366.77" y2="165.98" stroke="#747474" stroke-width="0.9" />
<line x1="363.57" y1="170.12" x2="366.77" y2="170.12" stroke="#747474" stroke-width="0.9" />
<line x1="363.57" y1="174.26" x2="366.77" y2="174.26" stroke="#747474" stroke-width="0.9" />
<line x1="362.07" y1="178.40" x2="368.27" y2="178.40" stroke="#747474" stroke-width="0.9" />
<line x1="363.57" y1="182.54" x2="366.77" y2="182.54" stroke="#747474" stroke-width="0.9" />
<line x1="363.57" y1="186.68" x2="366.77" y2="186.68" stroke="#747474" stroke-width="0.9" />
<line x1="363.57" y1="190.82" x2="366.77" y2="190.82" stroke="#747474" stroke-width="0.9" />
<line x1="363.57" y1="194.96" x2="366.77" y2="194.96" stroke="#747474" stroke-width="0.9" />
<line x1="363.57" y1="199.10" x2="366.77" y2="199.10" stroke="#747474" stroke-width="0.9" />
<line x1="362.07" y1="219.80" x2="368.27" y2="219.80" stroke="#747474" stroke-width="0.9" />
<line x1="363.57" y1="236.10" x2="366.77" y2="236.10" stroke="#747474" stroke-width="0.9" />
<line x1="362.07" y1="251.80" x2="368.27" y2="251.80" stroke="#747474" stroke-width="0.9" />
<line x1="363.57" y1="261.50" x2="366.77" y2="261.50" stroke="#747474" stroke-width="0.9" />
<line x1="362.07" y1="269.40" x2="368.27" y2="269.40" stroke="#8f8b3c" stroke-width="0.9" />
<line x1="362.07" y1="280.60" x2="368.27" y2="280.60" stroke="#8f8b3c" stroke-width="0.9" />
<line x1="362.07" y1="288.50" x2="368.27" y2="288.50" stroke="#8f8b3c" stroke-width="0.9" />
<rect x="359.22" y="135.80" width="11.90" height="2.10" fill="#e02428" rx="0.6" />
<rect x="377.20" y="93.70" width="17.10" height="13.10" fill="#4d4d4d" rx="2.2" />
<text x="385.75" y="104.00" font-size="9.2" fill="#ffffff" text-anchor="middle" font-weight="bold" textLength="13.8" lengthAdjust="spacingAndGlyphs">LTR</text>
<text x="385.75" y="118.20" font-size="8.2" fill="#f0f0f0" text-anchor="middle" font-weight="bold" letter-spacing="0.5">-27</text>
<path d="M377.70 135.6 V126.60 Q377.70 122.6 381.70 122.6 H389.80 Q393.80 122.6 393.80 126.6 V135.6 Q393.80 136.6 392.30 136.8 H379.20 Q377.70 136.6 377.70 135.6 Z" fill="#2a2a2a" stroke="#686868" stroke-width="0.8"/>
<path d="M377.70 139.6 Q377.70 138 379.70 137.6 H391.80 Q393.80 138 393.80 139.6 V288 Q393.80 292.2 389.80 292.2 H381.70 Q377.70 292.2 377.70 288 Z" fill="#2a2a2a" stroke="#686868" stroke-width="0.8"/>
<rect x="379.70" y="250.80" width="12.10" height="41.20" fill="#f6f13e" stroke="#0a0a20" stroke-width="0.5" />
<line x1="382.65" y1="124.50" x2="388.85" y2="124.50" stroke="#747474" stroke-width="0.9" />
<line x1="384.15" y1="128.67" x2="387.35" y2="128.67" stroke="#747474" stroke-width="0.9" />
<line x1="384.15" y1="132.83" x2="387.35" y2="132.83" stroke="#747474" stroke-width="0.9" />
<line x1="384.15" y1="141.14" x2="387.35" y2="141.14" stroke="#747474" stroke-width="0.9" />
<line x1="384.15" y1="145.28" x2="387.35" y2="145.28" stroke="#747474" stroke-width="0.9" />
<line x1="384.15" y1="149.42" x2="387.35" y2="149.42" stroke="#747474" stroke-width="0.9" />
<line x1="384.15" y1="153.56" x2="387.35" y2="153.56" stroke="#747474" stroke-width="0.9" />
<line x1="384.15" y1="157.70" x2="387.35" y2="157.70" stroke="#747474" stroke-width="0.9" />
<line x1="384.15" y1="161.84" x2="387.35" y2="161.84" stroke="#747474" stroke-width="0.9" />
<line x1="384.15" y1="165.98" x2="387.35" y2="165.98" stroke="#747474" stroke-width="0.9" />
<line x1="384.15" y1="170.12" x2="387.35" y2="170.12" stroke="#747474" stroke-width="0.9" />
<line x1="384.15" y1="174.26" x2="387.35" y2="174.26" stroke="#747474" stroke-width="0.9" />
<line x1="382.65" y1="178.40" x2="388.85" y2="178.40" stroke="#747474" stroke-width="0.9" />
<line x1="384.15" y1="182.54" x2="387.35" y2="182.54" stroke="#747474" stroke-width="0.9" />
<line x1="384.15" y1="186.68" x2="387.35" y2="186.68" stroke="#747474" stroke-width="0.9" />
<line x1="384.15" y1="190.82" x2="387.35" y2="190.82" stroke="#747474" stroke-width="0.9" />
<line x1="384.15" y1="194.96" x2="387.35" y2="194.96" stroke="#747474" stroke-width="0.9" />
<line x1="384.15" y1="199.10" x2="387.35" y2="199.10" stroke="#747474" stroke-width="0.9" />
<line x1="382.65" y1="219.80" x2="388.85" y2="219.80" stroke="#747474" stroke-width="0.9" />
<line x1="384.15" y1="236.10" x2="387.35" y2="236.10" stroke="#747474" stroke-width="0.9" />
<line x1="382.65" y1="251.80" x2="388.85" y2="251.80" stroke="#8f8b3c" stroke-width="0.9" />
<line x1="384.15" y1="261.50" x2="387.35" y2="261.50" stroke="#8f8b3c" stroke-width="0.9" />
<line x1="382.65" y1="269.40" x2="388.85" y2="269.40" stroke="#8f8b3c" stroke-width="0.9" />
<line x1="382.65" y1="280.60" x2="388.85" y2="280.60" stroke="#8f8b3c" stroke-width="0.9" />
<line x1="382.65" y1="288.50" x2="388.85" y2="288.50" stroke="#8f8b3c" stroke-width="0.9" />
<rect x="379.80" y="135.80" width="11.90" height="2.10" fill="#e02428" rx="0.6" />
<rect x="397.78" y="93.70" width="17.10" height="13.10" fill="#4d4d4d" rx="2.2" />
<text x="406.33" y="103.20" font-size="7.8" fill="#ffffff" text-anchor="middle" font-weight="bold" textLength="13.4" lengthAdjust="spacingAndGlyphs">RTR</text>
<text x="406.33" y="118.20" font-size="8.2" fill="#f0f0f0" text-anchor="middle" font-weight="bold" letter-spacing="0.5">-26</text>
<path d="M398.28 135.6 V126.60 Q398.28 122.6 402.28 122.6 H410.38 Q414.38 122.6 414.38 126.6 V135.6 Q414.38 136.6 412.88 136.8 H399.78 Q398.28 136.6 398.28 135.6 Z" fill="#2a2a2a" stroke="#686868" stroke-width="0.8"/>
<path d="M398.28 139.6 Q398.28 138 400.28 137.6 H412.38 Q414.38 138 414.38 139.6 V288 Q414.38 292.2 410.38 292.2 H402.28 Q398.28 292.2 398.28 288 Z" fill="#2a2a2a" stroke="#686868" stroke-width="0.8"/>
<rect x="400.28" y="250.00" width="12.10" height="42.00" fill="#f6f13e" stroke="#0a0a20" stroke-width="0.5" />
<line x1="403.23" y1="124.50" x2="409.43" y2="124.50" stroke="#747474" stroke-width="0.9" />
<line x1="404.73" y1="128.67" x2="407.93" y2="128.67" stroke="#747474" stroke-width="0.9" />
<line x1="404.73" y1="132.83" x2="407.93" y2="132.83" stroke="#747474" stroke-width="0.9" />
<line x1="404.73" y1="141.14" x2="407.93" y2="141.14" stroke="#747474" stroke-width="0.9" />
<line x1="404.73" y1="145.28" x2="407.93" y2="145.28" stroke="#747474" stroke-width="0.9" />
<line x1="404.73" y1="149.42" x2="407.93" y2="149.42" stroke="#747474" stroke-width="0.9" />
<line x1="404.73" y1="153.56" x2="407.93" y2="153.56" stroke="#747474" stroke-width="0.9" />
<line x1="404.73" y1="157.70" x2="407.93" y2="157.70" stroke="#747474" stroke-width="0.9" />
<line x1="404.73" y1="161.84" x2="407.93" y2="161.84" stroke="#747474" stroke-width="0.9" />
<line x1="404.73" y1="165.98" x2="407.93" y2="165.98" stroke="#747474" stroke-width="0.9" />
<line x1="404.73" y1="170.12" x2="407.93" y2="170.12" stroke="#747474" stroke-width="0.9" />
<line x1="404.73" y1="174.26" x2="407.93" y2="174.26" stroke="#747474" stroke-width="0.9" />
<line x1="403.23" y1="178.40" x2="409.43" y2="178.40" stroke="#747474" stroke-width="0.9" />
<line x1="404.73" y1="182.54" x2="407.93" y2="182.54" stroke="#747474" stroke-width="0.9" />
<line x1="404.73" y1="186.68" x2="407.93" y2="186.68" stroke="#747474" stroke-width="0.9" />
<line x1="404.73" y1="190.82" x2="407.93" y2="190.82" stroke="#747474" stroke-width="0.9" />
<line x1="404.73" y1="194.96" x2="407.93" y2="194.96" stroke="#747474" stroke-width="0.9" />
<line x1="404.73" y1="199.10" x2="407.93" y2="199.10" stroke="#747474" stroke-width="0.9" />
<line x1="403.23" y1="219.80" x2="409.43" y2="219.80" stroke="#747474" stroke-width="0.9" />
<line x1="404.73" y1="236.10" x2="407.93" y2="236.10" stroke="#747474" stroke-width="0.9" />
<line x1="403.23" y1="251.80" x2="409.43" y2="251.80" stroke="#8f8b3c" stroke-width="0.9" />
<line x1="404.73" y1="261.50" x2="407.93" y2="261.50" stroke="#8f8b3c" stroke-width="0.9" />
<line x1="403.23" y1="269.40" x2="409.43" y2="269.40" stroke="#8f8b3c" stroke-width="0.9" />
<line x1="403.23" y1="280.60" x2="409.43" y2="280.60" stroke="#8f8b3c" stroke-width="0.9" />
<line x1="403.23" y1="288.50" x2="409.43" y2="288.50" stroke="#8f8b3c" stroke-width="0.9" />
<rect x="400.38" y="135.80" width="11.90" height="2.10" fill="#e02428" rx="0.6" />
<line x1="166.60" y1="124.50" x2="166.60" y2="288.50" stroke="#5a5a5a" stroke-width="0.8" />
<line x1="166.60" y1="124.50" x2="170.40" y2="124.50" stroke="#5a5a5a" stroke-width="0.8" />
<line x1="166.60" y1="128.67" x2="168.80" y2="128.67" stroke="#5a5a5a" stroke-width="0.8" />
<line x1="166.60" y1="132.83" x2="168.80" y2="132.83" stroke="#5a5a5a" stroke-width="0.8" />
<line x1="166.60" y1="141.14" x2="168.80" y2="141.14" stroke="#5a5a5a" stroke-width="0.8" />
<line x1="166.60" y1="145.28" x2="168.80" y2="145.28" stroke="#5a5a5a" stroke-width="0.8" />
<line x1="166.60" y1="149.42" x2="170.40" y2="149.42" stroke="#5a5a5a" stroke-width="0.8" />
<line x1="166.60" y1="153.56" x2="168.80" y2="153.56" stroke="#5a5a5a" stroke-width="0.8" />
<line x1="166.60" y1="157.70" x2="168.80" y2="157.70" stroke="#5a5a5a" stroke-width="0.8" />
<line x1="166.60" y1="161.84" x2="170.40" y2="161.84" stroke="#5a5a5a" stroke-width="0.8" />
<line x1="166.60" y1="165.98" x2="168.80" y2="165.98" stroke="#5a5a5a" stroke-width="0.8" />
<line x1="166.60" y1="170.12" x2="168.80" y2="170.12" stroke="#5a5a5a" stroke-width="0.8" />
<line x1="166.60" y1="174.26" x2="168.80" y2="174.26" stroke="#5a5a5a" stroke-width="0.8" />
<line x1="166.60" y1="178.40" x2="170.40" y2="178.40" stroke="#5a5a5a" stroke-width="0.8" />
<line x1="166.60" y1="182.54" x2="168.80" y2="182.54" stroke="#5a5a5a" stroke-width="0.8" />
<line x1="166.60" y1="186.68" x2="168.80" y2="186.68" stroke="#5a5a5a" stroke-width="0.8" />
<line x1="166.60" y1="190.82" x2="168.80" y2="190.82" stroke="#5a5a5a" stroke-width="0.8" />
<line x1="166.60" y1="194.96" x2="168.80" y2="194.96" stroke="#5a5a5a" stroke-width="0.8" />
<line x1="166.60" y1="199.10" x2="168.80" y2="199.10" stroke="#5a5a5a" stroke-width="0.8" />
<line x1="166.60" y1="219.80" x2="170.40" y2="219.80" stroke="#5a5a5a" stroke-width="0.8" />
<line x1="166.60" y1="236.10" x2="168.80" y2="236.10" stroke="#5a5a5a" stroke-width="0.8" />
<line x1="166.60" y1="251.80" x2="170.40" y2="251.80" stroke="#5a5a5a" stroke-width="0.8" />
<line x1="166.60" y1="261.50" x2="168.80" y2="261.50" stroke="#5a5a5a" stroke-width="0.8" />
<line x1="166.60" y1="269.40" x2="170.40" y2="269.40" stroke="#5a5a5a" stroke-width="0.8" />
<line x1="166.60" y1="280.60" x2="170.40" y2="280.60" stroke="#5a5a5a" stroke-width="0.8" />
<line x1="166.60" y1="288.50" x2="170.40" y2="288.50" stroke="#5a5a5a" stroke-width="0.8" />
<line x1="166.60" y1="137.00" x2="170.40" y2="137.00" stroke="#5a5a5a" stroke-width="0.8" />
<text x="164.40" y="127.50" font-size="8.4" fill="#b6b6b6" text-anchor="end" font-weight="normal" stroke="#b6b6b6" stroke-width="0.28" stroke-linejoin="round" >3</text>
<text x="164.40" y="140.00" font-size="8.4" fill="#b6b6b6" text-anchor="end" font-weight="normal" stroke="#b6b6b6" stroke-width="0.28" stroke-linejoin="round" >0</text>
<text x="164.40" y="152.42" font-size="8.4" fill="#b6b6b6" text-anchor="end" font-weight="normal" stroke="#b6b6b6" stroke-width="0.28" stroke-linejoin="round" >3</text>
<text x="164.40" y="164.84" font-size="8.4" fill="#b6b6b6" text-anchor="end" font-weight="normal" stroke="#b6b6b6" stroke-width="0.28" stroke-linejoin="round" >6</text>
<text x="164.40" y="181.40" font-size="8.4" fill="#b6b6b6" text-anchor="end" font-weight="normal" stroke="#b6b6b6" stroke-width="0.28" stroke-linejoin="round" >10</text>
<text x="164.40" y="222.80" font-size="8.4" fill="#b6b6b6" text-anchor="end" font-weight="normal" stroke="#b6b6b6" stroke-width="0.28" stroke-linejoin="round" >20</text>
<text x="164.40" y="254.80" font-size="8.4" fill="#b6b6b6" text-anchor="end" font-weight="normal" stroke="#b6b6b6" stroke-width="0.28" stroke-linejoin="round" >30</text>
<text x="164.40" y="272.40" font-size="8.4" fill="#b6b6b6" text-anchor="end" font-weight="normal" stroke="#b6b6b6" stroke-width="0.28" stroke-linejoin="round" >40</text>
<text x="164.40" y="291.50" font-size="8.4" fill="#b6b6b6" text-anchor="end" font-weight="normal" stroke="#b6b6b6" stroke-width="0.28" stroke-linejoin="round" >60</text>
<text x="146.20" y="120.80" font-size="8.3" fill="#b6b6b6" text-anchor="start" font-weight="normal" stroke="#b6b6b6" stroke-width="0.28" stroke-linejoin="round" >dB</text>
<text x="156.20" y="122.80" font-size="5.8" fill="#b6b6b6" text-anchor="start" font-weight="normal" stroke="#b6b6b6" stroke-width="0.2" stroke-linejoin="round" >TP</text>
<rect x="479.25" y="93.70" width="13.40" height="13.10" fill="#4d4d4d" rx="2.2" />
<text transform="translate(485.95 104.00) scale(0.95 1)" font-size="10.4" fill="#ffffff" text-anchor="middle" font-weight="bold" >M</text>
<text x="485.95" y="118.10" font-size="8.2" fill="#a81414" text-anchor="middle" font-weight="normal" >7.3</text>
<path d="M479.75 178.6 V126.4 Q479.75 122.6 483.55 122.6 H488.35 Q492.15 122.6 492.15 126.4 V178.6 Q492.15 179.8 490.65 179.8 H481.25 Q479.75 179.8 479.75 178.6 Z" fill="#2a2a2a" stroke="#686868" stroke-width="0.8"/>
<path d="M479.75 182.2 Q479.75 180.8 481.25 180.8 H490.65 Q492.15 180.8 492.15 182.2 V288.2 Q492.15 292.2 488.35 292.2 H483.55 Q479.75 292.2 479.75 288.2 Z" fill="#2a2a2a" stroke="#686868" stroke-width="0.8"/>
<rect x="481.35" y="150.10" width="9.20" height="23.90" fill="#e40000" />
<rect x="481.35" y="174.00" width="9.20" height="5.40" fill="#7fe62c" />
<rect x="481.35" y="179.30" width="9.20" height="1.40" fill="#e02020" />
<rect x="481.35" y="180.90" width="9.20" height="6.20" fill="#7fe62c" />
<rect x="481.35" y="187.10" width="9.20" height="104.90" fill="#78baea" />
<line x1="483.35" y1="125.93" x2="488.55" y2="125.93" stroke="#747474" stroke-width="0.9" />
<line x1="484.95" y1="131.96" x2="486.95" y2="131.96" stroke="#747474" stroke-width="0.9" />
<line x1="484.95" y1="137.99" x2="486.95" y2="137.99" stroke="#747474" stroke-width="0.9" />
<line x1="483.35" y1="144.02" x2="488.55" y2="144.02" stroke="#747474" stroke-width="0.9" />
<line x1="484.95" y1="150.05" x2="486.95" y2="150.05" stroke="#747474" stroke-width="0.9" />
<line x1="484.95" y1="156.08" x2="486.95" y2="156.08" stroke="#b86060" stroke-width="0.9" />
<line x1="483.35" y1="162.11" x2="488.55" y2="162.11" stroke="#b86060" stroke-width="0.9" />
<line x1="484.95" y1="168.14" x2="486.95" y2="168.14" stroke="#b86060" stroke-width="0.9" />
<line x1="484.95" y1="174.17" x2="486.95" y2="174.17" stroke="#7aa860" stroke-width="0.9" />
<line x1="484.95" y1="186.23" x2="486.95" y2="186.23" stroke="#7aa860" stroke-width="0.9" />
<line x1="484.95" y1="192.26" x2="486.95" y2="192.26" stroke="#7a8f9c" stroke-width="0.9" />
<line x1="483.35" y1="198.29" x2="488.55" y2="198.29" stroke="#7a8f9c" stroke-width="0.9" />
<line x1="484.95" y1="204.32" x2="486.95" y2="204.32" stroke="#7a8f9c" stroke-width="0.9" />
<line x1="484.95" y1="210.35" x2="486.95" y2="210.35" stroke="#7a8f9c" stroke-width="0.9" />
<line x1="483.35" y1="216.38" x2="488.55" y2="216.38" stroke="#7a8f9c" stroke-width="0.9" />
<line x1="484.95" y1="222.41" x2="486.95" y2="222.41" stroke="#7a8f9c" stroke-width="0.9" />
<line x1="484.95" y1="228.44" x2="486.95" y2="228.44" stroke="#7a8f9c" stroke-width="0.9" />
<line x1="483.35" y1="234.47" x2="488.55" y2="234.47" stroke="#7a8f9c" stroke-width="0.9" />
<line x1="484.95" y1="240.50" x2="486.95" y2="240.50" stroke="#7a8f9c" stroke-width="0.9" />
<line x1="484.95" y1="246.53" x2="486.95" y2="246.53" stroke="#7a8f9c" stroke-width="0.9" />
<line x1="483.35" y1="252.56" x2="488.55" y2="252.56" stroke="#7a8f9c" stroke-width="0.9" />
<line x1="484.95" y1="258.59" x2="486.95" y2="258.59" stroke="#7a8f9c" stroke-width="0.9" />
<line x1="484.95" y1="264.62" x2="486.95" y2="264.62" stroke="#7a8f9c" stroke-width="0.9" />
<line x1="483.35" y1="270.65" x2="488.55" y2="270.65" stroke="#7a8f9c" stroke-width="0.9" />
<line x1="484.95" y1="276.68" x2="486.95" y2="276.68" stroke="#7a8f9c" stroke-width="0.9" />
<line x1="484.95" y1="282.71" x2="486.95" y2="282.71" stroke="#7a8f9c" stroke-width="0.9" />
<line x1="483.35" y1="288.74" x2="488.55" y2="288.74" stroke="#7a8f9c" stroke-width="0.9" />
<rect x="494.90" y="93.70" width="13.40" height="13.10" fill="#4d4d4d" rx="2.2" />
<text transform="translate(501.60 104.00) scale(0.95 1)" font-size="10.4" fill="#ffffff" text-anchor="middle" font-weight="bold" >S</text>
<text x="501.60" y="118.10" font-size="8.2" fill="#a81414" text-anchor="middle" font-weight="normal" >6.0</text>
<path d="M495.40 178.6 V126.4 Q495.40 122.6 499.20 122.6 H504.00 Q507.80 122.6 507.80 126.4 V178.6 Q507.80 179.8 506.30 179.8 H496.90 Q495.40 179.8 495.40 178.6 Z" fill="#2a2a2a" stroke="#686868" stroke-width="0.8"/>
<path d="M495.40 182.2 Q495.40 180.8 496.90 180.8 H506.30 Q507.80 180.8 507.80 182.2 V288.2 Q507.80 292.2 504.00 292.2 H499.20 Q495.40 292.2 495.40 288.2 Z" fill="#2a2a2a" stroke="#686868" stroke-width="0.8"/>
<rect x="497.00" y="145.00" width="9.20" height="29.00" fill="#e40000" />
<rect x="497.00" y="174.00" width="9.20" height="5.40" fill="#7fe62c" />
<rect x="497.00" y="179.30" width="9.20" height="1.40" fill="#e02020" />
<rect x="497.00" y="180.90" width="9.20" height="6.20" fill="#7fe62c" />
<rect x="497.00" y="187.10" width="9.20" height="104.90" fill="#78baea" />
<line x1="499.00" y1="125.93" x2="504.20" y2="125.93" stroke="#747474" stroke-width="0.9" />
<line x1="500.60" y1="131.96" x2="502.60" y2="131.96" stroke="#747474" stroke-width="0.9" />
<line x1="500.60" y1="137.99" x2="502.60" y2="137.99" stroke="#747474" stroke-width="0.9" />
<line x1="499.00" y1="144.02" x2="504.20" y2="144.02" stroke="#747474" stroke-width="0.9" />
<line x1="500.60" y1="150.05" x2="502.60" y2="150.05" stroke="#b86060" stroke-width="0.9" />
<line x1="500.60" y1="156.08" x2="502.60" y2="156.08" stroke="#b86060" stroke-width="0.9" />
<line x1="499.00" y1="162.11" x2="504.20" y2="162.11" stroke="#b86060" stroke-width="0.9" />
<line x1="500.60" y1="168.14" x2="502.60" y2="168.14" stroke="#b86060" stroke-width="0.9" />
<line x1="500.60" y1="174.17" x2="502.60" y2="174.17" stroke="#7aa860" stroke-width="0.9" />
<line x1="500.60" y1="186.23" x2="502.60" y2="186.23" stroke="#7aa860" stroke-width="0.9" />
<line x1="500.60" y1="192.26" x2="502.60" y2="192.26" stroke="#7a8f9c" stroke-width="0.9" />
<line x1="499.00" y1="198.29" x2="504.20" y2="198.29" stroke="#7a8f9c" stroke-width="0.9" />
<line x1="500.60" y1="204.32" x2="502.60" y2="204.32" stroke="#7a8f9c" stroke-width="0.9" />
<line x1="500.60" y1="210.35" x2="502.60" y2="210.35" stroke="#7a8f9c" stroke-width="0.9" />
<line x1="499.00" y1="216.38" x2="504.20" y2="216.38" stroke="#7a8f9c" stroke-width="0.9" />
<line x1="500.60" y1="222.41" x2="502.60" y2="222.41" stroke="#7a8f9c" stroke-width="0.9" />
<line x1="500.60" y1="228.44" x2="502.60" y2="228.44" stroke="#7a8f9c" stroke-width="0.9" />
<line x1="499.00" y1="234.47" x2="504.20" y2="234.47" stroke="#7a8f9c" stroke-width="0.9" />
<line x1="500.60" y1="240.50" x2="502.60" y2="240.50" stroke="#7a8f9c" stroke-width="0.9" />
<line x1="500.60" y1="246.53" x2="502.60" y2="246.53" stroke="#7a8f9c" stroke-width="0.9" />
<line x1="499.00" y1="252.56" x2="504.20" y2="252.56" stroke="#7a8f9c" stroke-width="0.9" />
<line x1="500.60" y1="258.59" x2="502.60" y2="258.59" stroke="#7a8f9c" stroke-width="0.9" />
<line x1="500.60" y1="264.62" x2="502.60" y2="264.62" stroke="#7a8f9c" stroke-width="0.9" />
<line x1="499.00" y1="270.65" x2="504.20" y2="270.65" stroke="#7a8f9c" stroke-width="0.9" />
<line x1="500.60" y1="276.68" x2="502.60" y2="276.68" stroke="#7a8f9c" stroke-width="0.9" />
<line x1="500.60" y1="282.71" x2="502.60" y2="282.71" stroke="#7a8f9c" stroke-width="0.9" />
<line x1="499.00" y1="288.74" x2="504.20" y2="288.74" stroke="#7a8f9c" stroke-width="0.9" />
<rect x="510.50" y="93.70" width="13.40" height="13.10" fill="#4d4d4d" rx="2.2" />
<text transform="translate(517.20 104.00) scale(0.95 1)" font-size="10.4" fill="#ffffff" text-anchor="middle" font-weight="bold" >I</text>
<text x="517.20" y="118.10" font-size="8.2" fill="#a81414" text-anchor="middle" font-weight="normal" >5.1</text>
<path d="M511.00 178.6 V126.4 Q511.00 122.6 514.80 122.6 H519.60 Q523.40 122.6 523.40 126.4 V178.6 Q523.40 179.8 521.90 179.8 H512.50 Q511.00 179.8 511.00 178.6 Z" fill="#2a2a2a" stroke="#686868" stroke-width="0.8"/>
<path d="M511.00 182.2 Q511.00 180.8 512.50 180.8 H521.90 Q523.40 180.8 523.40 182.2 V288.2 Q523.40 292.2 519.60 292.2 H514.80 Q511.00 292.2 511.00 288.2 Z" fill="#2a2a2a" stroke="#686868" stroke-width="0.8"/>
<rect x="512.60" y="149.00" width="9.20" height="31.20" fill="#e40000" />
<rect x="512.60" y="179.30" width="9.20" height="1.40" fill="#e02020" />
<rect x="512.60" y="180.90" width="9.20" height="11.80" fill="#7fe62c" />
<rect x="512.60" y="192.70" width="9.20" height="99.30" fill="#78baea" />
<line x1="514.60" y1="125.93" x2="519.80" y2="125.93" stroke="#747474" stroke-width="0.9" />
<line x1="516.20" y1="131.96" x2="518.20" y2="131.96" stroke="#747474" stroke-width="0.9" />
<line x1="516.20" y1="137.99" x2="518.20" y2="137.99" stroke="#747474" stroke-width="0.9" />
<line x1="514.60" y1="144.02" x2="519.80" y2="144.02" stroke="#747474" stroke-width="0.9" />
<line x1="516.20" y1="150.05" x2="518.20" y2="150.05" stroke="#b86060" stroke-width="0.9" />
<line x1="516.20" y1="156.08" x2="518.20" y2="156.08" stroke="#b86060" stroke-width="0.9" />
<line x1="514.60" y1="162.11" x2="519.80" y2="162.11" stroke="#b86060" stroke-width="0.9" />
<line x1="516.20" y1="168.14" x2="518.20" y2="168.14" stroke="#b86060" stroke-width="0.9" />
<line x1="516.20" y1="174.17" x2="518.20" y2="174.17" stroke="#b86060" stroke-width="0.9" />
<line x1="516.20" y1="186.23" x2="518.20" y2="186.23" stroke="#7aa860" stroke-width="0.9" />
<line x1="516.20" y1="192.26" x2="518.20" y2="192.26" stroke="#7aa860" stroke-width="0.9" />
<line x1="514.60" y1="198.29" x2="519.80" y2="198.29" stroke="#7a8f9c" stroke-width="0.9" />
<line x1="516.20" y1="204.32" x2="518.20" y2="204.32" stroke="#7a8f9c" stroke-width="0.9" />
<line x1="516.20" y1="210.35" x2="518.20" y2="210.35" stroke="#7a8f9c" stroke-width="0.9" />
<line x1="514.60" y1="216.38" x2="519.80" y2="216.38" stroke="#7a8f9c" stroke-width="0.9" />
<line x1="516.20" y1="222.41" x2="518.20" y2="222.41" stroke="#7a8f9c" stroke-width="0.9" />
<line x1="516.20" y1="228.44" x2="518.20" y2="228.44" stroke="#7a8f9c" stroke-width="0.9" />
<line x1="514.60" y1="234.47" x2="519.80" y2="234.47" stroke="#7a8f9c" stroke-width="0.9" />
<line x1="516.20" y1="240.50" x2="518.20" y2="240.50" stroke="#7a8f9c" stroke-width="0.9" />
<line x1="516.20" y1="246.53" x2="518.20" y2="246.53" stroke="#7a8f9c" stroke-width="0.9" />
<line x1="514.60" y1="252.56" x2="519.80" y2="252.56" stroke="#7a8f9c" stroke-width="0.9" />
<line x1="516.20" y1="258.59" x2="518.20" y2="258.59" stroke="#7a8f9c" stroke-width="0.9" />
<line x1="516.20" y1="264.62" x2="518.20" y2="264.62" stroke="#7a8f9c" stroke-width="0.9" />
<line x1="514.60" y1="270.65" x2="519.80" y2="270.65" stroke="#7a8f9c" stroke-width="0.9" />
<line x1="516.20" y1="276.68" x2="518.20" y2="276.68" stroke="#7a8f9c" stroke-width="0.9" />
<line x1="516.20" y1="282.71" x2="518.20" y2="282.71" stroke="#7a8f9c" stroke-width="0.9" />
<line x1="514.60" y1="288.74" x2="519.80" y2="288.74" stroke="#7a8f9c" stroke-width="0.9" />
<line x1="474.60" y1="125.93" x2="474.60" y2="288.74" stroke="#5a5a5a" stroke-width="0.8" />
<line x1="474.60" y1="125.93" x2="478.80" y2="125.93" stroke="#5a5a5a" stroke-width="0.8" />
<line x1="474.60" y1="131.96" x2="476.80" y2="131.96" stroke="#5a5a5a" stroke-width="0.8" />
<line x1="474.60" y1="137.99" x2="476.80" y2="137.99" stroke="#5a5a5a" stroke-width="0.8" />
<line x1="474.60" y1="144.02" x2="478.80" y2="144.02" stroke="#5a5a5a" stroke-width="0.8" />
<line x1="474.60" y1="150.05" x2="476.80" y2="150.05" stroke="#5a5a5a" stroke-width="0.8" />
<line x1="474.60" y1="156.08" x2="476.80" y2="156.08" stroke="#5a5a5a" stroke-width="0.8" />
<line x1="474.60" y1="162.11" x2="478.80" y2="162.11" stroke="#5a5a5a" stroke-width="0.8" />
<line x1="474.60" y1="168.14" x2="476.80" y2="168.14" stroke="#5a5a5a" stroke-width="0.8" />
<line x1="474.60" y1="174.17" x2="476.80" y2="174.17" stroke="#5a5a5a" stroke-width="0.8" />
<line x1="474.60" y1="180.20" x2="478.80" y2="180.20" stroke="#5a5a5a" stroke-width="0.8" />
<line x1="474.60" y1="186.23" x2="476.80" y2="186.23" stroke="#5a5a5a" stroke-width="0.8" />
<line x1="474.60" y1="192.26" x2="476.80" y2="192.26" stroke="#5a5a5a" stroke-width="0.8" />
<line x1="474.60" y1="198.29" x2="478.80" y2="198.29" stroke="#5a5a5a" stroke-width="0.8" />
<line x1="474.60" y1="204.32" x2="476.80" y2="204.32" stroke="#5a5a5a" stroke-width="0.8" />
<line x1="474.60" y1="210.35" x2="476.80" y2="210.35" stroke="#5a5a5a" stroke-width="0.8" />
<line x1="474.60" y1="216.38" x2="478.80" y2="216.38" stroke="#5a5a5a" stroke-width="0.8" />
<line x1="474.60" y1="222.41" x2="476.80" y2="222.41" stroke="#5a5a5a" stroke-width="0.8" />
<line x1="474.60" y1="228.44" x2="476.80" y2="228.44" stroke="#5a5a5a" stroke-width="0.8" />
<line x1="474.60" y1="234.47" x2="478.80" y2="234.47" stroke="#5a5a5a" stroke-width="0.8" />
<line x1="474.60" y1="240.50" x2="476.80" y2="240.50" stroke="#5a5a5a" stroke-width="0.8" />
<line x1="474.60" y1="246.53" x2="476.80" y2="246.53" stroke="#5a5a5a" stroke-width="0.8" />
<line x1="474.60" y1="252.56" x2="478.80" y2="252.56" stroke="#5a5a5a" stroke-width="0.8" />
<line x1="474.60" y1="258.59" x2="476.80" y2="258.59" stroke="#5a5a5a" stroke-width="0.8" />
<line x1="474.60" y1="264.62" x2="476.80" y2="264.62" stroke="#5a5a5a" stroke-width="0.8" />
<line x1="474.60" y1="270.65" x2="478.80" y2="270.65" stroke="#5a5a5a" stroke-width="0.8" />
<line x1="474.60" y1="276.68" x2="476.80" y2="276.68" stroke="#5a5a5a" stroke-width="0.8" />
<line x1="474.60" y1="282.71" x2="476.80" y2="282.71" stroke="#5a5a5a" stroke-width="0.8" />
<line x1="474.60" y1="288.74" x2="478.80" y2="288.74" stroke="#5a5a5a" stroke-width="0.8" />
<text x="472.40" y="128.93" font-size="8.4" fill="#b6b6b6" text-anchor="end" font-weight="normal" stroke="#b6b6b6" stroke-width="0.28" stroke-linejoin="round" >9</text>
<text x="472.40" y="147.02" font-size="8.4" fill="#b6b6b6" text-anchor="end" font-weight="normal" stroke="#b6b6b6" stroke-width="0.28" stroke-linejoin="round" >6</text>
<text x="472.40" y="165.11" font-size="8.4" fill="#b6b6b6" text-anchor="end" font-weight="normal" stroke="#b6b6b6" stroke-width="0.28" stroke-linejoin="round" >3</text>
<text x="472.40" y="183.20" font-size="8.4" fill="#b6b6b6" text-anchor="end" font-weight="normal" stroke="#b6b6b6" stroke-width="0.28" stroke-linejoin="round" >0</text>
<text x="472.40" y="201.29" font-size="8.4" fill="#b6b6b6" text-anchor="end" font-weight="normal" stroke="#b6b6b6" stroke-width="0.28" stroke-linejoin="round" >3</text>
<text x="472.40" y="219.38" font-size="8.4" fill="#b6b6b6" text-anchor="end" font-weight="normal" stroke="#b6b6b6" stroke-width="0.28" stroke-linejoin="round" >6</text>
<text x="472.40" y="237.47" font-size="8.4" fill="#b6b6b6" text-anchor="end" font-weight="normal" stroke="#b6b6b6" stroke-width="0.28" stroke-linejoin="round" >9</text>
<text x="472.40" y="255.56" font-size="8.4" fill="#b6b6b6" text-anchor="end" font-weight="normal" stroke="#b6b6b6" stroke-width="0.28" stroke-linejoin="round" >12</text>
<text x="472.40" y="273.65" font-size="8.4" fill="#b6b6b6" text-anchor="end" font-weight="normal" stroke="#b6b6b6" stroke-width="0.28" stroke-linejoin="round" >15</text>
<text x="472.40" y="291.74" font-size="8.4" fill="#b6b6b6" text-anchor="end" font-weight="normal" stroke="#b6b6b6" stroke-width="0.28" stroke-linejoin="round" >18</text>
<text x="461.60" y="121.60" font-size="8.3" fill="#b6b6b6" text-anchor="start" font-weight="normal" stroke="#b6b6b6" stroke-width="0.28" stroke-linejoin="round" >LU</text>
<rect x="588.20" y="93.70" width="34.80" height="13.10" fill="#4d4d4d" rx="2.2" />
<text transform="translate(605.60 104.00) scale(0.9 1)" font-size="10.4" fill="#ffffff" text-anchor="middle" font-weight="bold" >LRA</text>
<text x="605.60" y="118.20" font-size="8.6" fill="#f0f0f0" text-anchor="middle" font-weight="bold" letter-spacing="0.4">2.3</text>
<rect x="588.70" y="122.60" width="34.00" height="111.80" fill="#2a2a2a" rx="4" stroke="#686868" stroke-width="0.8" />
<path d="M590.9 211 H620.4 V232.8 Q620.4 233.7 619.4 233.7 H591.9 Q590.9 233.7 590.9 232.8 Z" fill="#68b0ee"/>
<rect x="590.90" y="211.00" width="29.50" height="3.20" fill="#62b05a" />
<line x1="583.60" y1="124.00" x2="583.60" y2="234.00" stroke="#5a5a5a" stroke-width="0.8" />
<line x1="583.60" y1="224.00" x2="586.00" y2="224.00" stroke="#5a5a5a" stroke-width="0.8" />
<line x1="583.60" y1="214.00" x2="588.20" y2="214.00" stroke="#5a5a5a" stroke-width="0.8" />
<line x1="583.60" y1="204.00" x2="586.00" y2="204.00" stroke="#5a5a5a" stroke-width="0.8" />
<line x1="583.60" y1="194.00" x2="588.20" y2="194.00" stroke="#5a5a5a" stroke-width="0.8" />
<line x1="583.60" y1="184.00" x2="586.00" y2="184.00" stroke="#5a5a5a" stroke-width="0.8" />
<line x1="583.60" y1="174.00" x2="588.20" y2="174.00" stroke="#5a5a5a" stroke-width="0.8" />
<line x1="583.60" y1="164.00" x2="586.00" y2="164.00" stroke="#5a5a5a" stroke-width="0.8" />
<line x1="583.60" y1="154.00" x2="588.20" y2="154.00" stroke="#5a5a5a" stroke-width="0.8" />
<line x1="583.60" y1="144.00" x2="586.00" y2="144.00" stroke="#5a5a5a" stroke-width="0.8" />
<line x1="583.60" y1="134.00" x2="588.20" y2="134.00" stroke="#5a5a5a" stroke-width="0.8" />
<line x1="583.60" y1="124.00" x2="586.00" y2="124.00" stroke="#5a5a5a" stroke-width="0.8" />
<text x="581.20" y="217.00" font-size="8.4" fill="#b6b6b6" text-anchor="end" font-weight="normal" stroke="#b6b6b6" stroke-width="0.28" stroke-linejoin="round" >2</text>
<text x="581.20" y="197.00" font-size="8.4" fill="#b6b6b6" text-anchor="end" font-weight="normal" stroke="#b6b6b6" stroke-width="0.28" stroke-linejoin="round" >4</text>
<text x="581.20" y="177.00" font-size="8.4" fill="#b6b6b6" text-anchor="end" font-weight="normal" stroke="#b6b6b6" stroke-width="0.28" stroke-linejoin="round" >6</text>
<text x="581.20" y="157.00" font-size="8.4" fill="#b6b6b6" text-anchor="end" font-weight="normal" stroke="#b6b6b6" stroke-width="0.28" stroke-linejoin="round" >8</text>
<text x="581.20" y="137.00" font-size="8.4" fill="#b6b6b6" text-anchor="end" font-weight="normal" stroke="#b6b6b6" stroke-width="0.28" stroke-linejoin="round" >10</text>
<text x="570.80" y="121.60" font-size="8.3" fill="#b6b6b6" text-anchor="start" font-weight="normal" stroke="#b6b6b6" stroke-width="0.28" stroke-linejoin="round" >LU</text>
<rect x="704.00" y="99.50" width="246.00" height="110.30" fill="#292929" rx="3" stroke="#5e5e5e" stroke-width="0.9" />
<g clip-path="url(#specclip)">
<rect x="705.90" y="202.10" width="3.30" height="7.70" fill="#f4ef3c" stroke="#55521a" stroke-width="0.3" />
<rect x="709.82" y="188.80" width="3.30" height="21.00" fill="#f4ef3c" stroke="#55521a" stroke-width="0.3" />
<rect x="713.75" y="172.30" width="3.30" height="37.50" fill="#f4ef3c" stroke="#55521a" stroke-width="0.3" />
<rect x="717.67" y="165.30" width="3.30" height="44.50" fill="#f4ef3c" stroke="#55521a" stroke-width="0.3" />
<rect x="721.60" y="162.10" width="3.30" height="47.70" fill="#f4ef3c" stroke="#55521a" stroke-width="0.3" />
<rect x="725.52" y="162.10" width="3.30" height="47.70" fill="#f4ef3c" stroke="#55521a" stroke-width="0.3" />
<rect x="729.45" y="173.70" width="3.30" height="36.10" fill="#f4ef3c" stroke="#55521a" stroke-width="0.3" />
<rect x="733.38" y="197.70" width="3.30" height="12.10" fill="#f4ef3c" stroke="#55521a" stroke-width="0.3" />
<rect x="737.30" y="167.70" width="3.30" height="42.10" fill="#f4ef3c" stroke="#55521a" stroke-width="0.3" />
<rect x="741.23" y="139.60" width="3.30" height="70.20" fill="#f4ef3c" stroke="#55521a" stroke-width="0.3" />
<rect x="745.15" y="121.80" width="3.30" height="88.00" fill="#f4ef3c" stroke="#55521a" stroke-width="0.3" />
<rect x="749.07" y="137.50" width="3.30" height="72.30" fill="#f4ef3c" stroke="#55521a" stroke-width="0.3" />
<rect x="753.00" y="136.70" width="3.30" height="73.10" fill="#f4ef3c" stroke="#55521a" stroke-width="0.3" />
<rect x="756.92" y="144.20" width="3.30" height="65.60" fill="#f4ef3c" stroke="#55521a" stroke-width="0.3" />
<rect x="760.85" y="151.20" width="3.30" height="58.60" fill="#f4ef3c" stroke="#55521a" stroke-width="0.3" />
<rect x="764.77" y="153.00" width="3.30" height="56.80" fill="#f4ef3c" stroke="#55521a" stroke-width="0.3" />
<rect x="768.70" y="162.10" width="3.30" height="47.70" fill="#f4ef3c" stroke="#55521a" stroke-width="0.3" />
<rect x="772.62" y="181.40" width="3.30" height="28.40" fill="#f4ef3c" stroke="#55521a" stroke-width="0.3" />
<rect x="776.55" y="154.70" width="3.30" height="55.10" fill="#f4ef3c" stroke="#55521a" stroke-width="0.3" />
<rect x="780.48" y="163.50" width="3.30" height="46.30" fill="#f4ef3c" stroke="#55521a" stroke-width="0.3" />
<rect x="784.40" y="199.00" width="3.30" height="10.80" fill="#f4ef3c" stroke="#55521a" stroke-width="0.3" />
<rect x="788.32" y="161.20" width="3.30" height="48.60" fill="#f4ef3c" stroke="#55521a" stroke-width="0.3" />
<rect x="792.25" y="150.20" width="3.30" height="59.60" fill="#f4ef3c" stroke="#55521a" stroke-width="0.3" />
<rect x="796.17" y="164.70" width="3.30" height="45.10" fill="#f4ef3c" stroke="#55521a" stroke-width="0.3" />
<rect x="800.10" y="181.00" width="3.30" height="28.80" fill="#f4ef3c" stroke="#55521a" stroke-width="0.3" />
<rect x="804.02" y="194.00" width="3.30" height="15.80" fill="#f4ef3c" stroke="#55521a" stroke-width="0.3" />
<rect x="807.95" y="200.70" width="3.30" height="9.10" fill="#f4ef3c" stroke="#55521a" stroke-width="0.3" />
<rect x="811.88" y="188.00" width="3.30" height="21.80" fill="#f4ef3c" stroke="#55521a" stroke-width="0.3" />
<rect x="815.80" y="128.20" width="3.30" height="81.60" fill="#f4ef3c" stroke="#55521a" stroke-width="0.3" />
<rect x="819.72" y="145.80" width="3.30" height="64.00" fill="#f4ef3c" stroke="#55521a" stroke-width="0.3" />
<rect x="823.65" y="184.60" width="3.30" height="25.20" fill="#f4ef3c" stroke="#55521a" stroke-width="0.3" />
<rect x="827.57" y="183.20" width="3.30" height="26.60" fill="#f4ef3c" stroke="#55521a" stroke-width="0.3" />
<rect x="831.50" y="139.00" width="3.30" height="70.80" fill="#f4ef3c" stroke="#55521a" stroke-width="0.3" />
<rect x="835.42" y="188.80" width="3.30" height="21.00" fill="#f4ef3c" stroke="#55521a" stroke-width="0.3" />
<rect x="839.35" y="128.20" width="3.30" height="81.60" fill="#f4ef3c" stroke="#55521a" stroke-width="0.3" />
<rect x="843.27" y="144.20" width="3.30" height="65.60" fill="#f4ef3c" stroke="#55521a" stroke-width="0.3" />
<rect x="847.20" y="195.40" width="3.30" height="14.40" fill="#f4ef3c" stroke="#55521a" stroke-width="0.3" />
<rect x="851.12" y="203.00" width="3.30" height="6.80" fill="#f4ef3c" stroke="#55521a" stroke-width="0.3" />
<rect x="855.05" y="198.00" width="3.30" height="11.80" fill="#f4ef3c" stroke="#55521a" stroke-width="0.3" />
<rect x="858.97" y="194.00" width="3.30" height="15.80" fill="#f4ef3c" stroke="#55521a" stroke-width="0.3" />
<rect x="862.90" y="197.20" width="3.30" height="12.60" fill="#f4ef3c" stroke="#55521a" stroke-width="0.3" />
<rect x="866.82" y="202.10" width="3.30" height="7.70" fill="#f4ef3c" stroke="#55521a" stroke-width="0.3" />
<rect x="870.75" y="195.40" width="3.30" height="14.40" fill="#f4ef3c" stroke="#55521a" stroke-width="0.3" />
<rect x="874.67" y="202.50" width="3.30" height="7.30" fill="#f4ef3c" stroke="#55521a" stroke-width="0.3" />
<rect x="878.60" y="209.00" width="3.30" height="0.80" fill="#f4ef3c" stroke="#55521a" stroke-width="0.3" />
<rect x="882.52" y="208.60" width="3.30" height="1.20" fill="#f4ef3c" stroke="#55521a" stroke-width="0.3" />
<rect x="886.45" y="209.00" width="3.30" height="0.80" fill="#f4ef3c" stroke="#55521a" stroke-width="0.3" />
<rect x="890.38" y="205.30" width="3.30" height="4.50" fill="#f4ef3c" stroke="#55521a" stroke-width="0.3" />
<rect x="894.30" y="196.30" width="3.30" height="13.50" fill="#f4ef3c" stroke="#55521a" stroke-width="0.3" />
<rect x="898.22" y="195.10" width="3.30" height="14.70" fill="#f4ef3c" stroke="#55521a" stroke-width="0.3" />
<rect x="902.15" y="185.30" width="3.30" height="24.50" fill="#f4ef3c" stroke="#55521a" stroke-width="0.3" />
<rect x="906.07" y="191.90" width="3.30" height="17.90" fill="#f4ef3c" stroke="#55521a" stroke-width="0.3" />
<rect x="910.00" y="197.20" width="3.30" height="12.60" fill="#f4ef3c" stroke="#55521a" stroke-width="0.3" />
<rect x="913.92" y="183.50" width="3.30" height="26.30" fill="#f4ef3c" stroke="#55521a" stroke-width="0.3" />
<rect x="917.85" y="180.20" width="3.30" height="29.60" fill="#f4ef3c" stroke="#55521a" stroke-width="0.3" />
<rect x="921.77" y="180.20" width="3.30" height="29.60" fill="#f4ef3c" stroke="#55521a" stroke-width="0.3" />
<rect x="925.70" y="177.90" width="3.30" height="31.90" fill="#f4ef3c" stroke="#55521a" stroke-width="0.3" />
<rect x="929.62" y="179.60" width="3.30" height="30.20" fill="#f4ef3c" stroke="#55521a" stroke-width="0.3" />
<rect x="933.55" y="194.60" width="3.30" height="15.20" fill="#f4ef3c" stroke="#55521a" stroke-width="0.3" />
<rect x="937.47" y="201.00" width="3.30" height="8.80" fill="#f4ef3c" stroke="#55521a" stroke-width="0.3" />
<rect x="941.40" y="209.00" width="3.30" height="0.80" fill="#f4ef3c" stroke="#55521a" stroke-width="0.3" />
<rect x="945.32" y="209.20" width="3.30" height="0.60" fill="#f4ef3c" stroke="#55521a" stroke-width="0.3" />
</g>
<line x1="705.50" y1="106.98" x2="948.40" y2="106.98" stroke="#909090" stroke-width="0.9" opacity="0.75"/>
<line x1="705.50" y1="114.04" x2="948.40" y2="114.04" stroke="#909090" stroke-width="0.9" opacity="0.75"/>
<line x1="705.50" y1="128.16" x2="948.40" y2="128.16" stroke="#909090" stroke-width="0.9" opacity="0.75"/>
<line x1="705.50" y1="135.22" x2="948.40" y2="135.22" stroke="#909090" stroke-width="0.9" opacity="0.75"/>
<line x1="705.50" y1="142.28" x2="948.40" y2="142.28" stroke="#909090" stroke-width="0.9" opacity="0.75"/>
<line x1="705.50" y1="149.34" x2="948.40" y2="149.34" stroke="#909090" stroke-width="0.9" opacity="0.75"/>
<line x1="705.50" y1="156.40" x2="948.40" y2="156.40" stroke="#909090" stroke-width="0.9" opacity="0.75"/>
<line x1="705.50" y1="163.46" x2="948.40" y2="163.46" stroke="#909090" stroke-width="0.9" opacity="0.75"/>
<line x1="705.50" y1="170.52" x2="948.40" y2="170.52" stroke="#909090" stroke-width="0.9" opacity="0.75"/>
<line x1="705.50" y1="177.58" x2="948.40" y2="177.58" stroke="#909090" stroke-width="0.9" opacity="0.75"/>
<line x1="705.50" y1="184.64" x2="948.40" y2="184.64" stroke="#909090" stroke-width="0.9" opacity="0.75"/>
<line x1="705.50" y1="191.70" x2="948.40" y2="191.70" stroke="#909090" stroke-width="0.9" opacity="0.75"/>
<line x1="705.50" y1="198.76" x2="948.40" y2="198.76" stroke="#909090" stroke-width="0.9" opacity="0.75"/>
<line x1="705.50" y1="205.82" x2="948.40" y2="205.82" stroke="#909090" stroke-width="0.9" opacity="0.75"/>
<line x1="705.50" y1="100.20" x2="948.40" y2="100.20" stroke="#777" stroke-width="0.9" />
<rect x="705.50" y="120.10" width="243.00" height="2.00" fill="#e02226" />
<rect x="744.90" y="118.60" width="3.60" height="2.60" fill="#e81010" />
<line x1="698.90" y1="99.80" x2="698.90" y2="205.90" stroke="#5a5a5a" stroke-width="0.8" />
<line x1="698.90" y1="99.92" x2="703.90" y2="99.92" stroke="#5a5a5a" stroke-width="0.8" />
<line x1="698.90" y1="103.45" x2="701.10" y2="103.45" stroke="#5a5a5a" stroke-width="0.8" />
<line x1="698.90" y1="106.98" x2="702.30" y2="106.98" stroke="#5a5a5a" stroke-width="0.8" />
<line x1="698.90" y1="110.51" x2="701.10" y2="110.51" stroke="#5a5a5a" stroke-width="0.8" />
<line x1="698.90" y1="114.04" x2="702.30" y2="114.04" stroke="#5a5a5a" stroke-width="0.8" />
<line x1="698.90" y1="117.57" x2="701.10" y2="117.57" stroke="#5a5a5a" stroke-width="0.8" />
<line x1="698.90" y1="121.10" x2="703.90" y2="121.10" stroke="#5a5a5a" stroke-width="0.8" />
<line x1="698.90" y1="124.63" x2="701.10" y2="124.63" stroke="#5a5a5a" stroke-width="0.8" />
<line x1="698.90" y1="128.16" x2="702.30" y2="128.16" stroke="#5a5a5a" stroke-width="0.8" />
<line x1="698.90" y1="131.69" x2="701.10" y2="131.69" stroke="#5a5a5a" stroke-width="0.8" />
<line x1="698.90" y1="135.22" x2="702.30" y2="135.22" stroke="#5a5a5a" stroke-width="0.8" />
<line x1="698.90" y1="138.75" x2="701.10" y2="138.75" stroke="#5a5a5a" stroke-width="0.8" />
<line x1="698.90" y1="142.28" x2="703.90" y2="142.28" stroke="#5a5a5a" stroke-width="0.8" />
<line x1="698.90" y1="145.81" x2="701.10" y2="145.81" stroke="#5a5a5a" stroke-width="0.8" />
<line x1="698.90" y1="149.34" x2="702.30" y2="149.34" stroke="#5a5a5a" stroke-width="0.8" />
<line x1="698.90" y1="152.87" x2="701.10" y2="152.87" stroke="#5a5a5a" stroke-width="0.8" />
<line x1="698.90" y1="156.40" x2="702.30" y2="156.40" stroke="#5a5a5a" stroke-width="0.8" />
<line x1="698.90" y1="159.93" x2="701.10" y2="159.93" stroke="#5a5a5a" stroke-width="0.8" />
<line x1="698.90" y1="163.46" x2="703.90" y2="163.46" stroke="#5a5a5a" stroke-width="0.8" />
<line x1="698.90" y1="166.99" x2="701.10" y2="166.99" stroke="#5a5a5a" stroke-width="0.8" />
<line x1="698.90" y1="170.52" x2="702.30" y2="170.52" stroke="#5a5a5a" stroke-width="0.8" />
<line x1="698.90" y1="174.05" x2="701.10" y2="174.05" stroke="#5a5a5a" stroke-width="0.8" />
<line x1="698.90" y1="177.58" x2="702.30" y2="177.58" stroke="#5a5a5a" stroke-width="0.8" />
<line x1="698.90" y1="181.11" x2="701.10" y2="181.11" stroke="#5a5a5a" stroke-width="0.8" />
<line x1="698.90" y1="184.64" x2="703.90" y2="184.64" stroke="#5a5a5a" stroke-width="0.8" />
<line x1="698.90" y1="188.17" x2="701.10" y2="188.17" stroke="#5a5a5a" stroke-width="0.8" />
<line x1="698.90" y1="191.70" x2="702.30" y2="191.70" stroke="#5a5a5a" stroke-width="0.8" />
<line x1="698.90" y1="195.23" x2="701.10" y2="195.23" stroke="#5a5a5a" stroke-width="0.8" />
<line x1="698.90" y1="198.76" x2="702.30" y2="198.76" stroke="#5a5a5a" stroke-width="0.8" />
<line x1="698.90" y1="202.29" x2="701.10" y2="202.29" stroke="#5a5a5a" stroke-width="0.8" />
<line x1="698.90" y1="205.82" x2="703.90" y2="205.82" stroke="#5a5a5a" stroke-width="0.8" />
<text x="695.60" y="103.12" font-size="8.4" fill="#b6b6b6" text-anchor="end" font-weight="normal" stroke="#b6b6b6" stroke-width="0.28" stroke-linejoin="round" >6</text>
<text x="695.60" y="124.30" font-size="8.4" fill="#b6b6b6" text-anchor="end" font-weight="normal" stroke="#b6b6b6" stroke-width="0.28" stroke-linejoin="round" >0</text>
<text x="695.60" y="145.48" font-size="8.4" fill="#b6b6b6" text-anchor="end" font-weight="normal" stroke="#b6b6b6" stroke-width="0.28" stroke-linejoin="round" >6</text>
<text x="695.60" y="166.66" font-size="8.4" fill="#b6b6b6" text-anchor="end" font-weight="normal" stroke="#b6b6b6" stroke-width="0.28" stroke-linejoin="round" >12</text>
<text x="695.60" y="187.84" font-size="8.4" fill="#b6b6b6" text-anchor="end" font-weight="normal" stroke="#b6b6b6" stroke-width="0.28" stroke-linejoin="round" >18</text>
<text x="695.60" y="209.02" font-size="8.4" fill="#b6b6b6" text-anchor="end" font-weight="normal" stroke="#b6b6b6" stroke-width="0.28" stroke-linejoin="round" >24</text>
<text x="685.60" y="98.00" font-size="8.3" fill="#b6b6b6" text-anchor="start" font-weight="normal" stroke="#b6b6b6" stroke-width="0.28" stroke-linejoin="round" >dB</text>
<line x1="723.20" y1="210.20" x2="723.20" y2="214.20" stroke="#5e5e5e" stroke-width="0.9" />
<text x="723.20" y="223.80" font-size="8.4" fill="#b6b6b6" text-anchor="middle" font-weight="normal" stroke="#b6b6b6" stroke-width="0.28" stroke-linejoin="round" >31</text>
<line x1="746.75" y1="210.20" x2="746.75" y2="214.20" stroke="#5e5e5e" stroke-width="0.9" />
<text x="746.75" y="223.80" font-size="8.4" fill="#b6b6b6" text-anchor="middle" font-weight="normal" stroke="#b6b6b6" stroke-width="0.28" stroke-linejoin="round" >63</text>
<line x1="770.30" y1="210.20" x2="770.30" y2="214.20" stroke="#5e5e5e" stroke-width="0.9" />
<text x="770.30" y="223.80" font-size="8.4" fill="#b6b6b6" text-anchor="middle" font-weight="normal" stroke="#b6b6b6" stroke-width="0.28" stroke-linejoin="round" >125</text>
<line x1="793.85" y1="210.20" x2="793.85" y2="214.20" stroke="#5e5e5e" stroke-width="0.9" />
<text x="793.85" y="223.80" font-size="8.4" fill="#b6b6b6" text-anchor="middle" font-weight="normal" stroke="#b6b6b6" stroke-width="0.28" stroke-linejoin="round" >250</text>
<line x1="817.40" y1="210.20" x2="817.40" y2="214.20" stroke="#5e5e5e" stroke-width="0.9" />
<text x="817.40" y="223.80" font-size="8.4" fill="#b6b6b6" text-anchor="middle" font-weight="normal" stroke="#b6b6b6" stroke-width="0.28" stroke-linejoin="round" >500</text>
<line x1="840.95" y1="210.20" x2="840.95" y2="214.20" stroke="#5e5e5e" stroke-width="0.9" />
<text x="840.95" y="223.80" font-size="8.4" fill="#b6b6b6" text-anchor="middle" font-weight="normal" stroke="#b6b6b6" stroke-width="0.28" stroke-linejoin="round" >1k</text>
<line x1="864.50" y1="210.20" x2="864.50" y2="214.20" stroke="#5e5e5e" stroke-width="0.9" />
<text x="864.50" y="223.80" font-size="8.4" fill="#b6b6b6" text-anchor="middle" font-weight="normal" stroke="#b6b6b6" stroke-width="0.28" stroke-linejoin="round" >2k</text>
<line x1="888.05" y1="210.20" x2="888.05" y2="214.20" stroke="#5e5e5e" stroke-width="0.9" />
<text x="888.05" y="223.80" font-size="8.4" fill="#b6b6b6" text-anchor="middle" font-weight="normal" stroke="#b6b6b6" stroke-width="0.28" stroke-linejoin="round" >4k</text>
<line x1="911.60" y1="210.20" x2="911.60" y2="214.20" stroke="#5e5e5e" stroke-width="0.9" />
<text x="911.60" y="223.80" font-size="8.4" fill="#b6b6b6" text-anchor="middle" font-weight="normal" stroke="#b6b6b6" stroke-width="0.28" stroke-linejoin="round" >8k</text>
<line x1="935.15" y1="210.20" x2="935.15" y2="214.20" stroke="#5e5e5e" stroke-width="0.9" />
<text x="935.15" y="223.80" font-size="8.4" fill="#b6b6b6" text-anchor="middle" font-weight="normal" stroke="#b6b6b6" stroke-width="0.28" stroke-linejoin="round" >16k</text>
<line x1="944.20" y1="210.20" x2="944.20" y2="214.20" stroke="#5e5e5e" stroke-width="0.9" />
<text x="947.40" y="223.80" font-size="8.4" fill="#b6b6b6" text-anchor="middle" font-weight="normal" stroke="#b6b6b6" stroke-width="0.28" stroke-linejoin="round" >H</text>
<rect x="148.70" y="375.40" width="20.00" height="9.90" fill="#26351c" />
<path d="M167 375.4 L167.0 375.4 L169.2 373.8 L170.3 371.5 L171.5 369.3 L172.6 367.0 L173.8 365.6 L174.9 364.1 L176.0 362.7 L177.2 361.3 L178.3 360.4 L179.5 359.5 L180.6 358.5 L181.8 357.6 L182.9 356.7 L184.0 356.4 L185.2 356.1 L186.3 355.9 L187.4 355.4 L188.9 355.8 L190.5 356.5 L191.8 356.6 L193.0 356.7 L194.3 357.1 L195.9 358.1 L197.5 358.6 L198.7 358.7 L199.9 358.3 L201.1 358.6 L202.4 358.1 L203.7 357.7 L205.0 357.3 L206.3 357.3 L207.6 357.6 L208.9 357.4 L210.2 357.2 L211.3 357.4 L212.4 357.3 L213.5 357.6 L214.7 357.9 L215.8 358.0 L217.0 358.1 L218.3 358.6 L219.7 358.4 L221.0 359.2 L222.3 359.2 L223.6 359.1 L224.9 358.8 L226.2 359.0 L227.4 358.6 L228.6 359.1 L229.8 359.0 L231.0 358.6 L232.4 358.4 L233.9 358.7 L235.3 358.4 L236.5 358.5 L237.6 358.3 L238.8 358.0 L239.9 357.8 L242.0 359.5 L243.2 359.8 L244.4 360.0 L245.6 360.0 L246.7 360.2 L247.8 359.6 L249.0 359.5 L250.2 359.7 L251.3 359.2 L252.4 359.2 L253.6 359.0 L254.7 358.6 L255.9 358.7 L257.0 357.8 L258.1 357.7 L259.3 357.3 L260.4 357.3 L261.5 356.5 L262.7 356.0 L263.9 355.7 L265.0 354.9 L266.1 354.6 L267.2 354.4 L268.4 353.4 L269.5 353.0 L270.6 353.2 L271.8 353.6 L272.9 353.6 L274.0 353.4 L275.1 353.4 L276.3 353.2 L277.5 353.3 L278.6 353.0 L279.7 353.7 L280.9 354.2 L282.0 354.5 L283.2 354.3 L284.3 354.4 L285.5 353.7 L286.7 353.5 L287.8 353.7 L289.0 353.2 L290.1 352.8 L291.2 353.0 L292.3 352.7 L293.4 352.8 L294.6 352.4 L295.7 352.3 L296.9 352.4 L298.0 352.1 L299.3 353.1 L300.7 354.2 L302.0 354.5 L303.3 354.8 L304.7 355.4 L306.0 356.1 L307.5 356.1 L309.0 355.5 L310.3 355.1 L311.5 354.6 L312.8 354.8 L314.2 353.9 L315.6 353.2 L317.0 352.5 L318.2 352.2 L319.5 351.9 L320.8 351.9 L322.0 351.3 L323.3 350.9 L324.7 351.0 L326.0 350.6 L327.2 350.9 L328.5 350.1 L329.8 350.1 L331.0 350.1 L332.3 349.6 L333.7 349.8 L335.0 349.2 L336.3 348.9 L337.7 348.9 L339.0 348.5 L340.1 348.9 L341.3 348.9 L342.5 349.5 L343.6 349.6 L345.1 349.9 L346.5 350.1 L348.0 350.8 L349.3 351.6 L350.6 352.3 L351.9 353.1 L353.2 354.3 L354.4 354.3 L355.6 354.8 L356.8 355.9 L358.0 356.2 L359.1 356.9 L360.2 356.8 L361.3 357.5 L362.4 357.7 L363.5 358.1 L364.6 357.7 L365.8 357.2 L366.9 356.6 L368.0 356.4 L369.2 356.4 L370.3 356.0 L371.5 355.6 L372.6 354.8 L373.8 354.6 L375.2 353.7 L376.6 352.5 L378.0 351.6 L379.2 350.8 L380.4 350.2 L381.7 349.6 L382.9 348.6 L384.3 348.5 L385.6 347.9 L387.0 346.7 L388.2 347.1 L389.5 346.8 L390.8 346.4 L392.0 345.7 L393.1 346.2 L394.3 345.7 L395.4 346.2 L396.5 346.0 L397.7 345.5 L398.8 345.6 L400.2 346.2 L401.6 346.5 L403.0 347.0 L404.2 347.5 L405.5 347.4 L406.8 347.6 L408.0 348.6 L409.5 348.8 L411.0 350.3 L412.3 350.3 L413.5 351.4 L414.8 351.9 L416.1 352.2 L417.4 352.2 L418.7 352.6 L420.0 352.4 L421.2 352.9 L422.5 352.8 L423.7 353.3 L425.0 353.4 L426.2 353.3 L427.4 353.2 L428.6 352.7 L429.8 352.6 L431.0 352.9 L432.4 352.7 L433.9 352.9 L435.3 352.7 L436.4 352.3 L437.6 352.5 L438.8 352.8 L439.9 352.6 L441.1 352.3 L442.2 352.8 L443.3 352.6 L444.5 351.8 L445.6 351.8 L446.7 351.5 L447.9 351.5 L449.0 350.9 L450.2 350.8 L451.4 350.9 L452.6 351.2 L453.8 350.6 L455.0 350.5 L456.4 350.8 L457.7 350.9 L459.0 350.5 L460.4 350.4 L461.5 350.6 L462.6 350.4 L463.8 349.8 L464.9 350.3 L466.0 349.7 L467.2 349.6 L468.3 349.9 L469.5 349.4 L470.6 349.5 L471.8 349.0 L473.2 349.3 L474.6 348.6 L476.0 348.4 L477.2 348.5 L478.4 348.2 L479.7 348.3 L480.9 348.4 L482.3 348.5 L483.6 348.3 L485.0 348.8 L486.2 348.9 L487.5 348.8 L488.8 349.0 L490.0 348.8 L491.1 348.5 L492.2 348.6 L493.3 349.0 L494.4 348.7 L495.5 349.0 L496.6 348.8 L496.6 375.4 Z" fill="#b40404" stroke="#d80808" stroke-width="0.7" stroke-linejoin="round"/>
<path d="M160.2 385.3 L167 375.4 H496.6 V385.3 Z" fill="#72d632"/>
<path d="M159 476.9 L159.2 440 L159.8 388 L161 385.3 H496.6 V476.9 Z" fill="#6497bb"/>
<path d="M159 476.9 L159.2 440 L159.8 388 L161 385.3 L167 375.4" fill="none" stroke="#8cc4ea" stroke-width="0.8"/>
<line x1="150.60" y1="476.40" x2="159.00" y2="476.40" stroke="#8cc4ea" stroke-width="0.9" />
<line x1="148.70" y1="333.04" x2="496.60" y2="333.04" stroke="#5a5e60" stroke-width="0.8" opacity="0.7"/>
<line x1="148.70" y1="348.76" x2="496.60" y2="348.76" stroke="#5a5e60" stroke-width="0.8" opacity="0.7"/>
<line x1="148.70" y1="364.48" x2="496.60" y2="364.48" stroke="#5a5e60" stroke-width="0.8" opacity="0.7"/>
<line x1="148.70" y1="395.92" x2="496.60" y2="395.92" stroke="#5a5e60" stroke-width="0.8" opacity="0.7"/>
<line x1="148.70" y1="411.64" x2="496.60" y2="411.64" stroke="#5a5e60" stroke-width="0.8" opacity="0.7"/>
<line x1="148.70" y1="427.36" x2="496.60" y2="427.36" stroke="#5a5e60" stroke-width="0.8" opacity="0.7"/>
<line x1="148.70" y1="443.08" x2="496.60" y2="443.08" stroke="#5a5e60" stroke-width="0.8" opacity="0.7"/>
<line x1="148.70" y1="458.80" x2="496.60" y2="458.80" stroke="#5a5e60" stroke-width="0.8" opacity="0.7"/>
<line x1="148.70" y1="380.20" x2="496.60" y2="380.20" stroke="#7a9a5a" stroke-width="0.8" stroke-dasharray="5 2.6" opacity="0.9"/>
<line x1="209.80" y1="323.00" x2="209.80" y2="476.90" stroke="#5a5e60" stroke-width="0.8" opacity="0.75"/>
<line x1="267.70" y1="323.00" x2="267.70" y2="476.90" stroke="#5a5e60" stroke-width="0.8" opacity="0.75"/>
<line x1="325.60" y1="323.00" x2="325.60" y2="476.90" stroke="#5a5e60" stroke-width="0.8" opacity="0.75"/>
<line x1="383.50" y1="323.00" x2="383.50" y2="476.90" stroke="#5a5e60" stroke-width="0.8" opacity="0.75"/>
<line x1="441.40" y1="323.00" x2="441.40" y2="476.90" stroke="#5a5e60" stroke-width="0.8" opacity="0.75"/>
<path d="M148.7 476.9 V323.0 H496.6 V476.9" fill="none" stroke="#4a4a4a" stroke-width="0.9"/>
<line x1="150.50" y1="323.00" x2="150.50" y2="476.90" stroke="#4a4a4a" stroke-width="0.8" />
<line x1="148.70" y1="476.90" x2="496.60" y2="476.90" stroke="#333" stroke-width="0.8" />
<rect x="499.20" y="349.40" width="13.20" height="25.80" fill="#e00000" />
<rect x="499.20" y="375.20" width="13.20" height="10.40" fill="#84ee34" />
<rect x="499.20" y="385.60" width="13.20" height="91.30" fill="#78b8e8" />
<line x1="497.80" y1="349.40" x2="497.80" y2="477.00" stroke="#050505" stroke-width="1.6" />
<line x1="520.10" y1="333.04" x2="520.10" y2="474.52" stroke="#5a5a5a" stroke-width="0.8" />
<line x1="515.90" y1="333.04" x2="520.10" y2="333.04" stroke="#5a5a5a" stroke-width="0.8" />
<line x1="518.10" y1="338.28" x2="520.10" y2="338.28" stroke="#5a5a5a" stroke-width="0.8" />
<line x1="518.10" y1="343.52" x2="520.10" y2="343.52" stroke="#5a5a5a" stroke-width="0.8" />
<line x1="515.90" y1="348.76" x2="520.10" y2="348.76" stroke="#5a5a5a" stroke-width="0.8" />
<line x1="518.10" y1="354.00" x2="520.10" y2="354.00" stroke="#5a5a5a" stroke-width="0.8" />
<line x1="518.10" y1="359.24" x2="520.10" y2="359.24" stroke="#5a5a5a" stroke-width="0.8" />
<line x1="515.90" y1="364.48" x2="520.10" y2="364.48" stroke="#5a5a5a" stroke-width="0.8" />
<line x1="518.10" y1="369.72" x2="520.10" y2="369.72" stroke="#5a5a5a" stroke-width="0.8" />
<line x1="518.10" y1="374.96" x2="520.10" y2="374.96" stroke="#5a5a5a" stroke-width="0.8" />
<line x1="515.90" y1="380.20" x2="520.10" y2="380.20" stroke="#5a5a5a" stroke-width="0.8" />
<line x1="518.10" y1="385.44" x2="520.10" y2="385.44" stroke="#5a5a5a" stroke-width="0.8" />
<line x1="518.10" y1="390.68" x2="520.10" y2="390.68" stroke="#5a5a5a" stroke-width="0.8" />
<line x1="515.90" y1="395.92" x2="520.10" y2="395.92" stroke="#5a5a5a" stroke-width="0.8" />
<line x1="518.10" y1="401.16" x2="520.10" y2="401.16" stroke="#5a5a5a" stroke-width="0.8" />
<line x1="518.10" y1="406.40" x2="520.10" y2="406.40" stroke="#5a5a5a" stroke-width="0.8" />
<line x1="515.90" y1="411.64" x2="520.10" y2="411.64" stroke="#5a5a5a" stroke-width="0.8" />
<line x1="518.10" y1="416.88" x2="520.10" y2="416.88" stroke="#5a5a5a" stroke-width="0.8" />
<line x1="518.10" y1="422.12" x2="520.10" y2="422.12" stroke="#5a5a5a" stroke-width="0.8" />
<line x1="515.90" y1="427.36" x2="520.10" y2="427.36" stroke="#5a5a5a" stroke-width="0.8" />
<line x1="518.10" y1="432.60" x2="520.10" y2="432.60" stroke="#5a5a5a" stroke-width="0.8" />
<line x1="518.10" y1="437.84" x2="520.10" y2="437.84" stroke="#5a5a5a" stroke-width="0.8" />
<line x1="515.90" y1="443.08" x2="520.10" y2="443.08" stroke="#5a5a5a" stroke-width="0.8" />
<line x1="518.10" y1="448.32" x2="520.10" y2="448.32" stroke="#5a5a5a" stroke-width="0.8" />
<line x1="518.10" y1="453.56" x2="520.10" y2="453.56" stroke="#5a5a5a" stroke-width="0.8" />
<line x1="515.90" y1="458.80" x2="520.10" y2="458.80" stroke="#5a5a5a" stroke-width="0.8" />
<line x1="518.10" y1="464.04" x2="520.10" y2="464.04" stroke="#5a5a5a" stroke-width="0.8" />
<line x1="518.10" y1="469.28" x2="520.10" y2="469.28" stroke="#5a5a5a" stroke-width="0.8" />
<line x1="515.90" y1="474.52" x2="520.10" y2="474.52" stroke="#5a5a5a" stroke-width="0.8" />
<text x="523.70" y="336.04" font-size="8.4" fill="#b6b6b6" text-anchor="start" font-weight="normal" stroke="#b6b6b6" stroke-width="0.28" stroke-linejoin="round" >9</text>
<text x="523.70" y="351.76" font-size="8.4" fill="#b6b6b6" text-anchor="start" font-weight="normal" stroke="#b6b6b6" stroke-width="0.28" stroke-linejoin="round" >6</text>
<text x="523.70" y="367.48" font-size="8.4" fill="#b6b6b6" text-anchor="start" font-weight="normal" stroke="#b6b6b6" stroke-width="0.28" stroke-linejoin="round" >3</text>
<text x="523.70" y="383.20" font-size="8.4" fill="#b6b6b6" text-anchor="start" font-weight="normal" stroke="#b6b6b6" stroke-width="0.28" stroke-linejoin="round" >0</text>
<text x="523.70" y="398.92" font-size="8.4" fill="#b6b6b6" text-anchor="start" font-weight="normal" stroke="#b6b6b6" stroke-width="0.28" stroke-linejoin="round" >3</text>
<text x="523.70" y="414.64" font-size="8.4" fill="#b6b6b6" text-anchor="start" font-weight="normal" stroke="#b6b6b6" stroke-width="0.28" stroke-linejoin="round" >6</text>
<text x="523.70" y="430.36" font-size="8.4" fill="#b6b6b6" text-anchor="start" font-weight="normal" stroke="#b6b6b6" stroke-width="0.28" stroke-linejoin="round" >9</text>
<text x="523.70" y="446.08" font-size="8.4" fill="#b6b6b6" text-anchor="start" font-weight="normal" stroke="#b6b6b6" stroke-width="0.28" stroke-linejoin="round" >12</text>
<text x="523.70" y="461.80" font-size="8.4" fill="#b6b6b6" text-anchor="start" font-weight="normal" stroke="#b6b6b6" stroke-width="0.28" stroke-linejoin="round" >15</text>
<text x="523.70" y="477.52" font-size="8.4" fill="#b6b6b6" text-anchor="start" font-weight="normal" stroke="#b6b6b6" stroke-width="0.28" stroke-linejoin="round" >18</text>
<text x="522.40" y="329.20" font-size="8.3" fill="#b6b6b6" text-anchor="start" font-weight="normal" stroke="#b6b6b6" stroke-width="0.28" stroke-linejoin="round" >LU</text>
<text transform="translate(148.20 493.20) scale(0.97 1)" font-size="13.6" fill="#b8b8b8" text-anchor="start" font-weight="normal" >30 s</text>
<text transform="translate(210.20 493.20) scale(0.97 1)" font-size="13.6" fill="#b8b8b8" text-anchor="middle" font-weight="normal" letter-spacing="-0.3">00:05</text>
<text transform="translate(268.10 493.20) scale(0.97 1)" font-size="13.6" fill="#b8b8b8" text-anchor="middle" font-weight="normal" letter-spacing="-0.3">00:10</text>
<text transform="translate(326.00 493.20) scale(0.97 1)" font-size="13.6" fill="#b8b8b8" text-anchor="middle" font-weight="normal" letter-spacing="-0.3">00:15</text>
<text transform="translate(383.90 493.20) scale(0.97 1)" font-size="13.6" fill="#b8b8b8" text-anchor="middle" font-weight="normal" letter-spacing="-0.3">00:20</text>
<text transform="translate(441.80 493.20) scale(0.97 1)" font-size="13.6" fill="#b8b8b8" text-anchor="middle" font-weight="normal" letter-spacing="-0.3">00:25</text>
<text x="506.40" y="493.40" font-size="14.5" fill="#ffffff" text-anchor="middle" font-weight="bold" >S</text>
<rect x="151.80" y="506.70" width="344.60" height="18.80" fill="#cdc230" />
<line x1="209.80" y1="506.70" x2="209.80" y2="525.50" stroke="#8f8a3a" stroke-width="0.8" />
<line x1="267.70" y1="506.70" x2="267.70" y2="525.50" stroke="#8f8a3a" stroke-width="0.8" />
<line x1="325.60" y1="506.70" x2="325.60" y2="525.50" stroke="#8f8a3a" stroke-width="0.8" />
<line x1="383.50" y1="506.70" x2="383.50" y2="525.50" stroke="#8f8a3a" stroke-width="0.8" />
<line x1="441.40" y1="506.70" x2="441.40" y2="525.50" stroke="#8f8a3a" stroke-width="0.8" />
<text x="500.20" y="519.60" font-size="8.4" fill="#ffffff" text-anchor="start" font-weight="bold" >TP</text>
<rect x="570.60" y="319.20" width="174.00" height="38.60" fill="#2d2d2d" rx="4" stroke="#6e6e6e" stroke-width="0.9" />
<rect x="571.90" y="320.50" width="171.40" height="36.00" fill="none" rx="3" stroke="#161616" stroke-width="0.9" />
<rect x="656.80" y="322.00" width="54.00" height="34.00" fill="#64b450" />
<line x1="588.30" y1="334.60" x2="588.30" y2="343.00" stroke="#6c6c6c" stroke-width="0.9" />
<line x1="605.40" y1="334.60" x2="605.40" y2="343.00" stroke="#6c6c6c" stroke-width="0.9" />
<line x1="622.50" y1="334.60" x2="622.50" y2="343.00" stroke="#6c6c6c" stroke-width="0.9" />
<line x1="639.60" y1="334.60" x2="639.60" y2="343.00" stroke="#6c6c6c" stroke-width="0.9" />
<line x1="673.80" y1="334.60" x2="673.80" y2="343.00" stroke="#7c9c74" stroke-width="0.9" />
<line x1="690.90" y1="334.60" x2="690.90" y2="343.00" stroke="#7c9c74" stroke-width="0.9" />
<line x1="708.00" y1="334.60" x2="708.00" y2="343.00" stroke="#7c9c74" stroke-width="0.9" />
<line x1="725.10" y1="334.60" x2="725.10" y2="343.00" stroke="#6c6c6c" stroke-width="0.9" />
<line x1="742.20" y1="334.60" x2="742.20" y2="343.00" stroke="#6c6c6c" stroke-width="0.9" />
<line x1="656.60" y1="330.60" x2="656.60" y2="347.40" stroke="#8a8a8a" stroke-width="0.9" />
<line x1="742.30" y1="330.60" x2="742.30" y2="347.40" stroke="#8a8a8a" stroke-width="1.1" />
<line x1="572.00" y1="330.60" x2="572.00" y2="347.40" stroke="#555" stroke-width="0.9" />
<rect x="780.50" y="341.60" width="171.60" height="171.60" fill="url(#dots)" />
<line x1="780.50" y1="341.60" x2="952.10" y2="513.20" stroke="#9a9a9a" stroke-width="0.9" />
<line x1="952.10" y1="341.60" x2="780.50" y2="513.20" stroke="#9a9a9a" stroke-width="0.9" />
<rect x="780.50" y="341.60" width="171.60" height="171.60" fill="none" stroke="#a0a0a0" stroke-width="0.9" />
<text x="780.80" y="333.20" font-size="6.4" fill="#c0c0c0" text-anchor="start" font-weight="normal" stroke="#c0c0c0" stroke-width="0.3" stroke-linejoin="round" >L</text>
<text x="947.40" y="333.20" font-size="6.4" fill="#c0c0c0" text-anchor="start" font-weight="normal" stroke="#c0c0c0" stroke-width="0.3" stroke-linejoin="round" >R</text>
<path d="M887.8 383.2 L884.9 387.5 L882.7 390.1 L880.5 394.7 L878.6 399.8 L880.6 402.2 L882.2 405.5 L879.3 409.0 L877.9 411.7 L878.0 415.4 L876.7 419.4 L874.0 422.4 L872.4 425.5 L870.7 429.4 L868.8 432.6 L866.0 436.8 L864.5 439.6 L860.2 443.6 L857.0 446.9 L853.6 450.8 L850.3 454.1 L846.7 456.8 L848.7 452.0 L850.8 447.3 L850.0 445.2 L851.9 440.5 L853.5 437.9 L855.3 435.1 L852.3 434.5 L854.4 431.1 L856.6 428.3 L854.9 425.4 L856.1 423.2 L858.1 420.2 L860.3 418.0 L860.7 415.2 L862.2 412.7 L864.6 409.8 L867.3 407.3 L868.7 403.9 L870.8 401.2 L872.3 398.7 L874.2 396.7 L876.7 393.4 L879.2 390.5 L881.3 387.7 L883.4 385.1 Z" fill="#d0f6f6" stroke="#d0f6f6" stroke-width="0.5" stroke-linejoin="round"/>
<path d="M878.9 390.0 L881.1 387.1 M865.6 428.4 L868.4 425.1 M857.8 442.1 L860.0 439.2 M859.4 425.8 L863.3 421.9 M872.6 401.5 L876.5 395.3 M865.1 435.2 L869.3 429.6 M854.9 434.5 L859.8 428.1 M867.7 427.4 L870.5 424.2 M874.8 397.6 L877.4 395.0 M855.9 437.0 L859.4 433.0 M857.9 437.8 L862.6 432.8 M847.9 449.7 L853.8 443.3 M858.4 416.3 L865.0 409.3 M882.1 387.0 L883.9 384.4 M865.0 407.2 L871.0 399.7 M882.2 389.6 L888.6 382.1 M852.6 442.2 L855.0 438.5 M880.0 390.0 L884.6 385.1 M873.1 422.7 L876.4 417.8 M862.1 427.1 L866.9 419.9 M870.1 409.6 L875.4 402.5 M855.0 441.6 L860.2 435.0 M872.8 422.7 L877.7 417.2 M872.5 422.8 L879.3 416.0 M870.6 420.1 L875.0 414.8 M868.4 428.4 L871.6 423.8 M854.4 449.6 L859.7 444.0 M864.1 427.3 L869.1 421.2 M869.4 407.8 L873.8 402.8 M878.1 395.0 L883.8 388.0 M872.3 400.5 L875.7 396.7 M860.5 432.9 L864.0 428.8 M867.7 431.4 L872.4 426.3 M855.7 436.4 L858.4 432.4 M862.3 419.2 L864.7 416.2 M868.2 430.7 L874.2 424.1 M882.0 389.3 L887.8 382.9 M863.5 432.5 L865.7 429.6 M866.6 431.1 L868.6 428.2 M871.3 413.4 L877.8 406.6 M847.3 457.1 L852.5 450.8 M869.6 407.3 L875.0 400.4 M870.0 415.3 L872.1 412.3 M855.7 444.3 L860.2 438.6 M876.6 396.9 L881.0 390.8 M878.7 393.4 L883.9 385.1 M849.9 448.8 L856.2 442.6 M855.4 426.7 L860.0 421.7 M856.6 425.9 L860.0 421.0 M870.6 416.7 L873.7 412.5 M865.4 427.9 L869.1 422.0 M870.4 422.6 L874.3 416.5 M883.9 387.6 L885.9 384.8 M862.7 429.1 L864.8 426.7 M880.4 388.5 L885.5 382.8 M854.9 447.2 L859.4 441.6 M863.1 417.3 L867.5 412.8 M870.1 413.5 L875.2 406.9 M862.9 420.2 L869.6 412.9 M855.4 437.7 L861.1 431.4" fill="none" stroke="#cdf4f4" stroke-width="0.9" stroke-linecap="round"/>
<path d="M874.6 395.3 L877.2 391.8 M858.5 444.9 L865.2 437.7 M869.0 403.6 L873.7 396.7 M872.1 419.4 L878.2 411.5 M870.4 400.8 L875.8 395.0 M871.3 402.7 L874.4 398.2 M870.8 420.2 L876.2 413.3 M859.6 442.4 L862.2 439.3 M857.4 422.4 L863.4 415.7 M870.0 406.1 L875.4 399.0 M852.3 442.9 L857.8 436.0 M860.3 418.7 L866.3 411.9 M864.9 414.6 L867.9 411.0 M855.0 447.4 L860.9 441.1 M864.6 438.6 L867.9 434.4 M868.4 405.7 L873.5 398.8" fill="none" stroke="#0a0c0c" stroke-width="0.6" stroke-linecap="round" opacity="0.8"/>
</svg>
</body></html>
